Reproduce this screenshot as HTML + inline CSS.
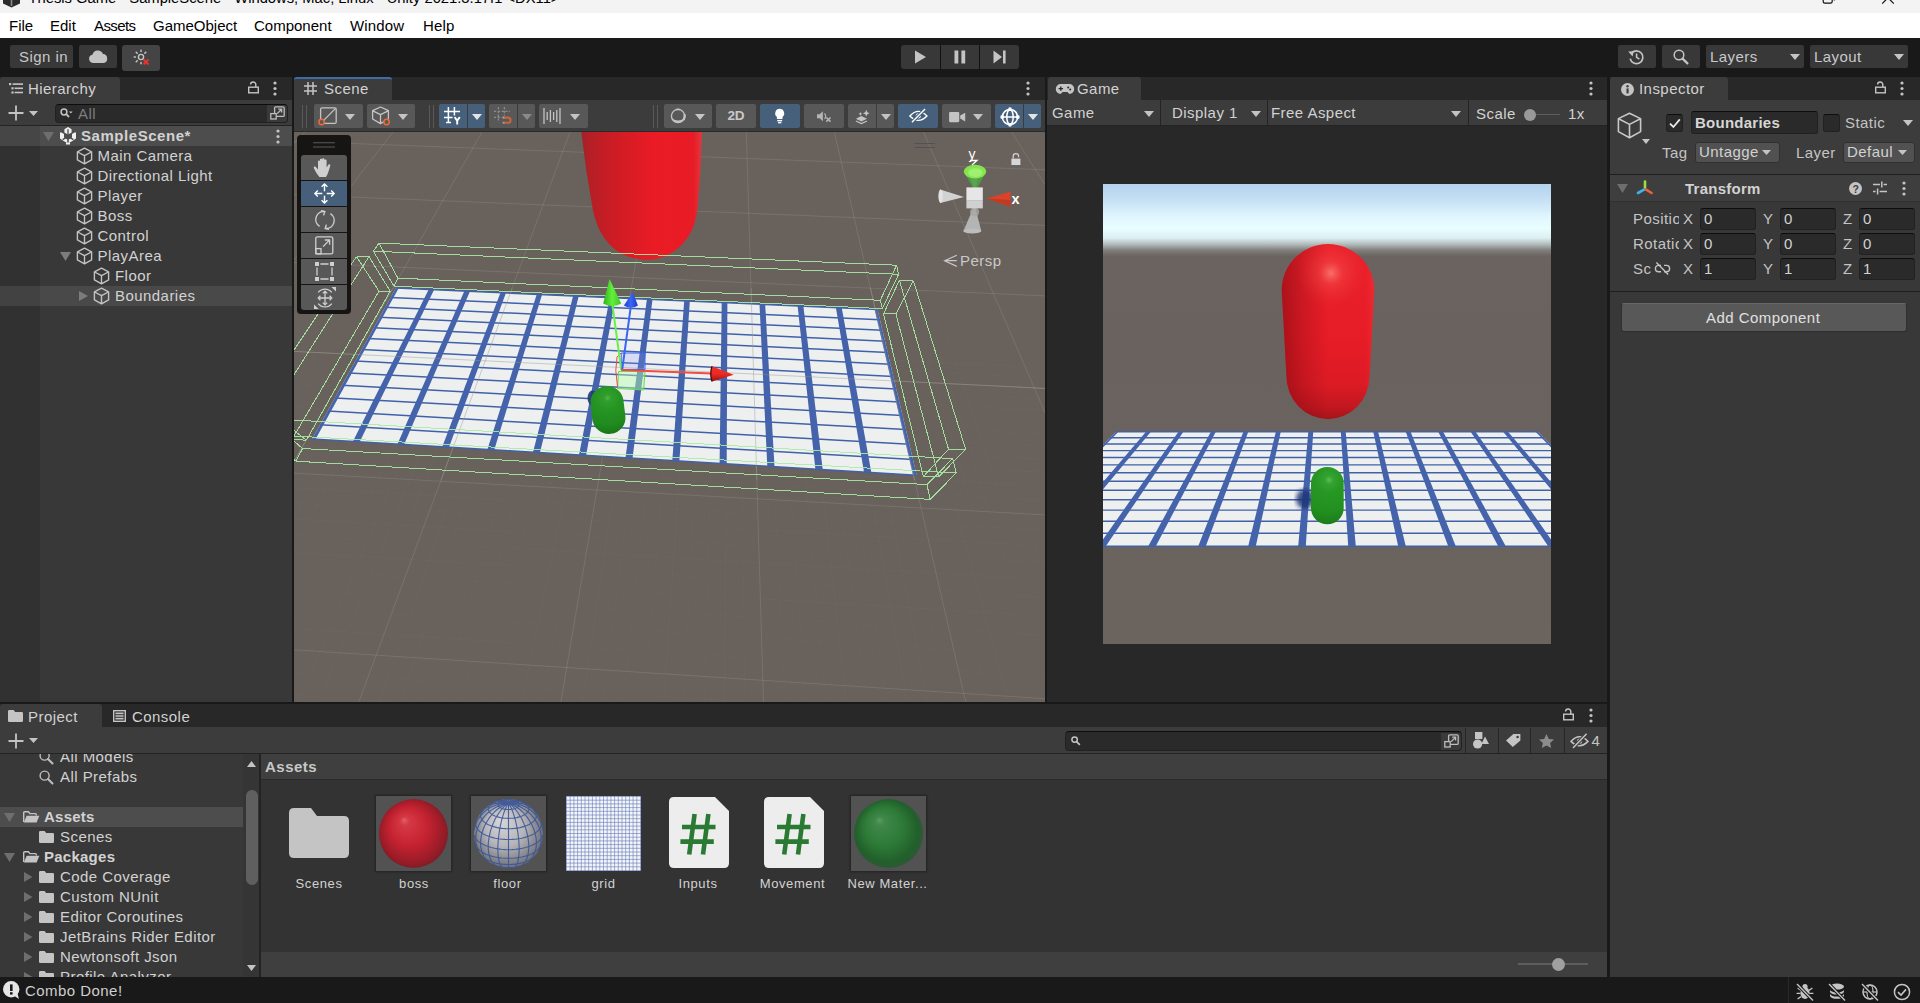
<!DOCTYPE html>
<html><head><meta charset="utf-8"><title>Unity</title><style>
*{box-sizing:border-box}
html,body{margin:0;padding:0}
body{width:1920px;height:1003px;position:relative;overflow:hidden;background:#191919;
 font-family:"Liberation Sans",sans-serif;font-size:15px;letter-spacing:.45px;color:#d2d2d2;line-height:20px}
.a{position:absolute}
.t{position:absolute;white-space:nowrap;line-height:20px;height:20px}
.b{font-weight:bold;letter-spacing:.25px}
.btn{position:absolute;background:#383838;border-radius:2px}
.tabbar{position:absolute;background:#282828;height:23px}
.tab{position:absolute;background:#3c3c3c;height:23px;border-radius:3px 3px 0 0}
.tool{position:absolute;background:#3c3c3c}
.panel{position:absolute;background:#383838}
.fld{position:absolute;background:#2a2a2a;border:1px solid #212121;border-top-color:#0d0d0d;border-radius:3px}
.sb{position:absolute;background:#585858;border-radius:2px;height:24px;top:104px}
.sbb{background:#46607c}
.row{position:absolute;left:0;width:292px;height:20px}
svg{position:absolute;overflow:visible}
.menu{position:absolute;top:15.8px;color:#000;letter-spacing:0;font-size:15px;line-height:20px;white-space:nowrap}
.al{position:absolute;top:875px;width:95px;text-align:center;font-size:13px;letter-spacing:.6px;line-height:18px;white-space:nowrap;color:#d2d2d2}
</style></head>
<body>
<div class="a" style="left:0px;top:0px;width:1920px;height:13px;background:#f3f3f3;"></div>
<svg style="left:2px;top:-8px" width="19" height="16" viewBox="0 0 19 16" ><path d="M9.5,0 L18,4.2 V11.4 L9.5,15.6 L1,11.4 V4.2 Z" fill="#2b2b2b"/><path d="M9.5,7.8 L16,4.6 M9.5,7.8 V14 M9.5,7.8 L3,4.6" stroke="#8a8a8a" stroke-width="1.6"/></svg>
<div class="t" style="left:28.5px;top:-12px;color:#000;letter-spacing:0;font-size:14.75px">Thesis Game - SampleScene - Windows, Mac, Linux - Unity 2021.3.17f1 &lt;DX11&gt;</div>
<svg style="left:1820px;top:0px" width="20" height="8" viewBox="0 0 20 8" ><rect x="3.2" y="-5" width="9" height="8.2" rx="1.6" fill="none" stroke="#111" stroke-width="1.2"/><path d="M14.3,-4V.6" stroke="#111" stroke-width="1.2"/></svg>
<svg style="left:1878px;top:0px" width="20" height="8" viewBox="0 0 20 8" ><path d="M4.2,3.6L16,-8.2M15.8,3.6L4,-8.2" stroke="#111" stroke-width="1.2" fill="none"/></svg>
<div class="a" style="left:0px;top:13px;width:1920px;height:25px;background:#ffffff;"></div>
<div class="menu" style="left:9px;">File</div>
<div class="menu" style="left:50px;">Edit</div>
<div class="menu" style="left:94px;letter-spacing:-.6px;">Assets</div>
<div class="menu" style="left:153px;">GameObject</div>
<div class="menu" style="left:254px;">Component</div>
<div class="menu" style="left:350px;letter-spacing:.15px;">Window</div>
<div class="menu" style="left:423px;letter-spacing:.15px;">Help</div>
<div class="a" style="left:0px;top:38px;width:1920px;height:39px;background:#191919;"></div>
<div class="btn" style="left:10px;top:45px;width:63px;height:23px"></div>
<div class="t" style="left:19px;top:46.5px;color:#c8c8c8">Sign in</div>
<div class="btn" style="left:79px;top:45px;width:38px;height:23px"></div>
<svg style="left:88px;top:50px" width="20" height="13" viewBox="0 0 20 13" ><path d="M5,13 a4.2,4.2 0 0 1 -.6,-8.3 a5.6,5.6 0 0 1 10.6,-.6 a4.5,4.5 0 0 1 .6,8.9 Z" fill="#c4c4c4"/></svg>
<div class="btn" style="left:122px;top:45px;width:38px;height:26px;background:#444;border-radius:3px"></div>
<svg style="left:133px;top:49px" width="18" height="18" viewBox="0 0 18 18" ><circle cx="8" cy="8" r="2.6" fill="none" stroke="#c4c4c4" stroke-width="1.4"/><g stroke="#c4c4c4" stroke-width="1.5" stroke-linecap="round"><path d="M8,1.2v1.2M8,13.6v1.2M1.2,8h1.2M3.2,3.2l.9,.9M12.8,3.2l-.9,.9M3.2,12.8l.9,-.9"/></g><path d="M10.5,10.5l5,5M15.5,10.5l-5,5" stroke="#e5342c" stroke-width="2.1"/></svg>
<div class="a" style="left:901px;top:45px;width:118px;height:23.5px;background:#121212;border-radius:3px"></div>
<div class="a" style="left:901px;top:45px;width:38.5px;height:23.5px;background:#383838;border-radius:3px 0 0 3px"></div>
<div class="a" style="left:940.5px;top:45px;width:38.5px;height:23.5px;background:#383838;border-radius:0"></div>
<div class="a" style="left:980px;top:45px;width:39px;height:23.5px;background:#383838;border-radius:0 3px 3px 0"></div>
<svg style="left:914px;top:50px" width="13" height="14" viewBox="0 0 13 14" ><polygon points="1,0.5 12,7 1,13.5" fill="#c4c4c4"/></svg>
<svg style="left:954px;top:50px" width="12" height="14" viewBox="0 0 12 14" ><rect x="0.5" y="0.5" width="3.8" height="13" fill="#c4c4c4"/><rect x="7.4" y="0.5" width="3.8" height="13" fill="#c4c4c4"/></svg>
<svg style="left:993px;top:50px" width="14" height="14" viewBox="0 0 14 14" ><polygon points="0.5,0.5 9,7 0.5,13.5" fill="#c4c4c4"/><rect x="10" y="0.5" width="2.6" height="13" fill="#c4c4c4"/></svg>
<div class="btn" style="left:1618px;top:45px;width:38px;height:23px"></div>
<svg style="left:1628px;top:49px" width="17" height="16" viewBox="0 0 17 16" ><path d="M3.2,4.6 A6.4,6.4 0 1 1 2.2,9.6" fill="none" stroke="#c4c4c4" stroke-width="1.7"/><polygon points="0.2,2.6 5.8,2.2 4.6,7.4" fill="#c4c4c4"/><path d="M8.6,4.4V8.4L11.4,10.2" fill="none" stroke="#c4c4c4" stroke-width="1.6"/></svg>
<div class="btn" style="left:1662px;top:45px;width:38px;height:23px"></div>
<svg style="left:1673px;top:49px" width="16" height="16" viewBox="0 0 16 16" ><circle cx="6" cy="6" r="4.8" fill="none" stroke="#c4c4c4" stroke-width="1.5"/><path d="M9.6,9.6 L14.4,14.4" stroke="#c4c4c4" stroke-width="2.2" stroke-linecap="round"/></svg>
<div class="btn" style="left:1706px;top:45px;width:98px;height:23px"></div>
<div class="t" style="left:1710px;top:46.5px;color:#c8c8c8">Layers</div>
<svg style="left:1790px;top:54px" width="10" height="6" viewBox="0 0 10 6" ><polygon points="0,0 10,0 5.0,6" fill="#c4c4c4"/></svg>
<div class="btn" style="left:1810px;top:45px;width:98px;height:23px"></div>
<div class="t" style="left:1814px;top:46.5px;color:#c8c8c8">Layout</div>
<svg style="left:1894px;top:54px" width="10" height="6" viewBox="0 0 10 6" ><polygon points="0,0 10,0 5.0,6" fill="#c4c4c4"/></svg>
<div class="tabbar" style="left:0;top:77px;width:292px"></div>
<div class="tab" style="left:0;top:77px;width:120px"></div>
<svg style="left:9px;top:83px" width="14" height="11" viewBox="0 0 14 11" ><g fill="#c4c4c4"><rect x="0" y="0" width="2.2" height="2.2"/><rect x="3.6" y=".3" width="10.4" height="1.6"/><rect x="2.4" y="4.2" width="2.2" height="2.2"/><rect x="5.6" y="4.5" width="8.4" height="1.6"/><rect x="2.4" y="8.4" width="2.2" height="2.2"/><rect x="5.6" y="8.7" width="8.4" height="1.6"/></g></svg>
<div class="t" style="left:28px;top:78.5px;">Hierarchy</div>
<svg style="left:248px;top:81px" width="11" height="13" viewBox="0 0 11 13" ><rect x=".7" y="6.2" width="9.6" height="5.6" fill="none" stroke="#c4c4c4" stroke-width="1.4"/><path d="M7.8,6V3.6a2.6,2.6 0 0 0 -5.2,0" fill="none" stroke="#c4c4c4" stroke-width="1.4"/></svg>
<svg style="left:273px;top:80.5px" width="4" height="15" viewBox="0 0 4 15" ><circle cx="2" cy="2" r="1.6" fill="#c4c4c4"/><circle cx="2" cy="7.5" r="1.6" fill="#c4c4c4"/><circle cx="2" cy="13" r="1.6" fill="#c4c4c4"/></svg>
<div class="tool" style="left:0;top:100px;width:292px;height:26px;border-bottom:1px solid #232323"></div>
<svg style="left:8px;top:105px" width="16" height="16" viewBox="0 0 16 16" ><path d="M8,0.5V15.5M0.5,8H15.5" stroke="#c4c4c4" stroke-width="1.8"/></svg>
<svg style="left:29px;top:110.5px" width="9" height="5" viewBox="0 0 9 5" ><polygon points="0,0 9,0 4.5,5" fill="#c4c4c4"/></svg>
<div class="fld" style="left:54.5px;top:103.5px;width:233.5px;height:19.5px;border-radius:4px"></div>
<div class="a" style="left:267px;top:105px;width:20px;height:17px;background:#3a3a3a;border-radius:0 3px 3px 0"></div>
<svg style="left:270px;top:106px" width="15" height="14" viewBox="0 0 15 14" ><rect x="4.6" y=".8" width="9.6" height="9.6" rx="1.2" fill="none" stroke="#bdbdbd" stroke-width="1.3"/><rect x=".8" y="7.6" width="5.4" height="5.4" fill="#3a3a3a" stroke="#bdbdbd" stroke-width="1.3"/><path d="M7.2,7.6L11.6,3.2M8.2,3.2h3.4v3.4" fill="none" stroke="#bdbdbd" stroke-width="1.3"/></svg>
<svg style="left:60px;top:108px" width="13" height="11" viewBox="0 0 13 11" ><circle cx="4" cy="4" r="2.9" fill="none" stroke="#c4c4c4" stroke-width="1.5"/><path d="M6.2,6.2L9,9" stroke="#c4c4c4" stroke-width="1.8"/><polygon points="9,3.4 12.6,3.4 10.8,5.6" fill="#c4c4c4"/></svg>
<div class="t" style="left:78px;top:103.5px;color:#7d7d7d">All</div>
<div class="a" style="left:0px;top:126px;width:292px;height:576px;background:#383838;"></div>
<div class="a" style="left:0px;top:126px;width:40px;height:576px;background:#313131;"></div>
<div class="a" style="left:0px;top:126px;width:292px;height:20px;background:rgba(255,255,255,.105);"></div>
<div class="a" style="left:0px;top:286px;width:292px;height:20px;background:rgba(255,255,255,.085);"></div>
<svg style="left:43px;top:131.5px" width="11" height="9" viewBox="0 0 11 9" ><polygon points="0,0 11,0 5.5,9" fill="#6e6e6e"/></svg>
<svg style="left:60px;top:127px" width="16" height="18" viewBox="0 0 16 18" ><g fill="#f0f0f0"><path d="M8,0 L11.6,2.2 V5.6 L8,7.4 L4.4,5.6 V2.2Z"/><path d="M1,5.2 L4,7 V10.6 L7.2,12.4 V16 L3.6,14 L0,11.4 V5.8Z"/><path d="M15,5.2 L12,7 V10.6 L8.8,12.4 V16 L12.4,14 L16,11.4 V5.8Z"/><rect x="6" y="15.5" width="4" height="2"/></g><path d="M8,2.2V9.4M8,9.4L2.6,12.6M8,9.4L13.4,12.6" stroke="#4a4a4a" stroke-width="1.3"/></svg>
<div class="t b" style="left:81px;top:125.5px;letter-spacing:.55px">SampleScene*</div>
<svg style="left:275.5px;top:128.5px" width="4" height="15" viewBox="0 0 4 15" ><circle cx="2" cy="2" r="1.6" fill="#c4c4c4"/><circle cx="2" cy="7.5" r="1.6" fill="#c4c4c4"/><circle cx="2" cy="13" r="1.6" fill="#c4c4c4"/></svg>
<svg style="left:76px;top:147px" width="17" height="18" viewBox="0 0 17 18" ><path d="M8.5,1.2 L15.6,4.9 V12.9 L8.5,16.8 L1.4,12.9 V4.9 Z M1.6,5 L8.5,8.7 L15.4,5 M8.5,8.7 V16.6" fill="none" stroke="#c2c2c2" stroke-width="1.4" stroke-linejoin="round"/></svg>
<div class="t" style="left:97.5px;top:145.5px;">Main Camera</div>
<svg style="left:76px;top:167px" width="17" height="18" viewBox="0 0 17 18" ><path d="M8.5,1.2 L15.6,4.9 V12.9 L8.5,16.8 L1.4,12.9 V4.9 Z M1.6,5 L8.5,8.7 L15.4,5 M8.5,8.7 V16.6" fill="none" stroke="#c2c2c2" stroke-width="1.4" stroke-linejoin="round"/></svg>
<div class="t" style="left:97.5px;top:165.5px;">Directional Light</div>
<svg style="left:76px;top:187px" width="17" height="18" viewBox="0 0 17 18" ><path d="M8.5,1.2 L15.6,4.9 V12.9 L8.5,16.8 L1.4,12.9 V4.9 Z M1.6,5 L8.5,8.7 L15.4,5 M8.5,8.7 V16.6" fill="none" stroke="#c2c2c2" stroke-width="1.4" stroke-linejoin="round"/></svg>
<div class="t" style="left:97.5px;top:185.5px;">Player</div>
<svg style="left:76px;top:207px" width="17" height="18" viewBox="0 0 17 18" ><path d="M8.5,1.2 L15.6,4.9 V12.9 L8.5,16.8 L1.4,12.9 V4.9 Z M1.6,5 L8.5,8.7 L15.4,5 M8.5,8.7 V16.6" fill="none" stroke="#c2c2c2" stroke-width="1.4" stroke-linejoin="round"/></svg>
<div class="t" style="left:97.5px;top:205.5px;">Boss</div>
<svg style="left:76px;top:227px" width="17" height="18" viewBox="0 0 17 18" ><path d="M8.5,1.2 L15.6,4.9 V12.9 L8.5,16.8 L1.4,12.9 V4.9 Z M1.6,5 L8.5,8.7 L15.4,5 M8.5,8.7 V16.6" fill="none" stroke="#c2c2c2" stroke-width="1.4" stroke-linejoin="round"/></svg>
<div class="t" style="left:97.5px;top:225.5px;">Control</div>
<svg style="left:76px;top:247px" width="17" height="18" viewBox="0 0 17 18" ><path d="M8.5,1.2 L15.6,4.9 V12.9 L8.5,16.8 L1.4,12.9 V4.9 Z M1.6,5 L8.5,8.7 L15.4,5 M8.5,8.7 V16.6" fill="none" stroke="#c2c2c2" stroke-width="1.4" stroke-linejoin="round"/></svg>
<div class="t" style="left:97.5px;top:245.5px;">PlayArea</div>
<svg style="left:93px;top:267px" width="17" height="18" viewBox="0 0 17 18" ><path d="M8.5,1.2 L15.6,4.9 V12.9 L8.5,16.8 L1.4,12.9 V4.9 Z M1.6,5 L8.5,8.7 L15.4,5 M8.5,8.7 V16.6" fill="none" stroke="#c2c2c2" stroke-width="1.4" stroke-linejoin="round"/></svg>
<div class="t" style="left:115px;top:265.5px;">Floor</div>
<svg style="left:93px;top:287px" width="17" height="18" viewBox="0 0 17 18" ><path d="M8.5,1.2 L15.6,4.9 V12.9 L8.5,16.8 L1.4,12.9 V4.9 Z M1.6,5 L8.5,8.7 L15.4,5 M8.5,8.7 V16.6" fill="none" stroke="#c2c2c2" stroke-width="1.4" stroke-linejoin="round"/></svg>
<div class="t" style="left:115px;top:285.5px;">Boundaries</div>
<svg style="left:60px;top:251.5px" width="11" height="9" viewBox="0 0 11 9" ><polygon points="0,0 11,0 5.5,9" fill="#7c7c7c"/></svg>
<svg style="left:79px;top:290.5px" width="9" height="10" viewBox="0 0 9 10" ><polygon points="0,0 9,5.0 0,10" fill="#7c7c7c"/></svg>
<div class="tabbar" style="left:294px;top:77px;width:751px"></div>
<div class="tab" style="left:294px;top:77px;width:98px;border-top:2px solid #3a6ea5"></div>
<svg style="left:304px;top:82px" width="13" height="13" viewBox="0 0 13 13" ><path d="M4,0V13M9,0V13M0,4H13M0,9H13" stroke="#c4c4c4" stroke-width="1.5"/></svg>
<div class="t" style="left:324px;top:78.5px;">Scene</div>
<svg style="left:1025.5px;top:80.5px" width="4" height="15" viewBox="0 0 4 15" ><circle cx="2" cy="2" r="1.6" fill="#c4c4c4"/><circle cx="2" cy="7.5" r="1.6" fill="#c4c4c4"/><circle cx="2" cy="13" r="1.6" fill="#c4c4c4"/></svg>
<div class="tool" style="left:294px;top:100px;width:751px;height:32px"></div>
<div class="a" style="left:294px;top:131px;width:751px;height:1.5px;background:#2a2a2a;"></div>
<svg style="left:301px;top:105px" width="7" height="23" viewBox="0 0 7 23" ><path d="M1.5,0V23M5.5,0V23" stroke="#595959" stroke-width="1"/></svg>
<svg style="left:428px;top:105px" width="7" height="23" viewBox="0 0 7 23" ><path d="M1.5,0V23M5.5,0V23" stroke="#595959" stroke-width="1"/></svg>
<svg style="left:652px;top:105px" width="7" height="23" viewBox="0 0 7 23" ><path d="M1.5,0V23M5.5,0V23" stroke="#595959" stroke-width="1"/></svg>
<div class="sb" style="left:314px;width:49px;border-radius:2px"></div>
<svg style="left:318px;top:107px" width="20" height="19" viewBox="0 0 20 19" ><rect x="2.6" y=".8" width="15.6" height="15.6" rx="1.5" fill="none" stroke="#c4c4c4" stroke-width="1.3"/><path d="M5.4,13.6L17.6,1.4" stroke="#c4c4c4" stroke-width="1.3"/><circle cx="3.6" cy="15" r="2.7" fill="#585858" stroke="#f0693b" stroke-width="1.5"/></svg>
<svg style="left:345px;top:113.5px" width="10" height="6" viewBox="0 0 10 6" ><polygon points="0,0 10,0 5.0,6" fill="#c4c4c4"/></svg>
<div class="sb" style="left:367px;width:48px;border-radius:2px"></div>
<svg style="left:371px;top:106px" width="21" height="21" viewBox="0 0 21 21" ><path d="M9.5,1 L17.4,4.6 V13 L9.5,17.6 L1.6,13 V4.6 Z M1.8,4.8 L9.5,8.6 L17.2,4.8 M9.5,8.6 V17.4" fill="none" stroke="#c4c4c4" stroke-width="1.3" stroke-linejoin="round"/><circle cx="15.6" cy="16" r="2.7" fill="#585858" stroke="#f0693b" stroke-width="1.5"/></svg>
<svg style="left:398px;top:113.5px" width="10" height="6" viewBox="0 0 10 6" ><polygon points="0,0 10,0 5.0,6" fill="#c4c4c4"/></svg>
<div class="sb sbb" style="left:439px;width:28px;border-radius:2px 0 0 2px"></div>
<div class="sb sbb" style="left:468px;width:17px;border-radius:0 2px 2px 0"></div>
<svg style="left:444px;top:107px" width="19" height="19" viewBox="0 0 19 19" ><g stroke="#fff" stroke-width="1.5" fill="none"><path d="M4.4,0V15.5M10.4,0V8.4M0,4.4H16M0,10.4H8.6M2,15.4h5"/><path d="M10.6,10.2L13.2,13.6L15.8,10.2M13.2,13.6V17.6" stroke-width="1.9"/></g></svg>
<svg style="left:472px;top:113.5px" width="10" height="6" viewBox="0 0 10 6" ><polygon points="0,0 10,0 5.0,6" fill="#e4e4e4"/></svg>
<div class="sb" style="left:489px;width:28px;border-radius:2px 0 0 2px"></div>
<div class="sb" style="left:518px;width:17px;border-radius:0 2px 2px 0"></div>
<svg style="left:494px;top:107px" width="19" height="19" viewBox="0 0 19 19" ><g stroke="#8d8d8d" stroke-width="1.3" fill="none" stroke-dasharray="2.2 1.6"><path d="M4.4,0V15.5M10.4,0V8.4M0,4.4H16M0,10.4H8.6"/></g><path d="M9.4,10.6H14a2.6,2.6 0 0 1 0,5.2H9.4" fill="none" stroke="#c8643c" stroke-width="2.1"/><path d="M8.6,10.6h1.8M8.6,15.8h1.8" stroke="#9a9a9a" stroke-width="2.1"/></svg>
<svg style="left:522px;top:113.5px" width="10" height="6" viewBox="0 0 10 6" ><polygon points="0,0 10,0 5.0,6" fill="#8a8a8a"/></svg>
<div class="sb" style="left:539px;width:49px;border-radius:2px"></div>
<svg style="left:543px;top:108px" width="18" height="17" viewBox="0 0 18 17" ><g stroke="#c4c4c4" stroke-width="1.3"><path d="M1,0V16M17,0V16" /><path d="M4.2,4V12M7.4,2V14M10.6,4V12M13.8,2V14"/></g></svg>
<svg style="left:570px;top:113.5px" width="10" height="6" viewBox="0 0 10 6" ><polygon points="0,0 10,0 5.0,6" fill="#c4c4c4"/></svg>
<div class="sb" style="left:664px;width:48px;border-radius:2px"></div>
<svg style="left:669.5px;top:108px" width="17" height="17" viewBox="0 0 19 19" ><circle cx="9" cy="9" r="7.4" fill="none" stroke="#c4c4c4" stroke-width="1.5"/><path d="M2.05,11.53 A7.4,7.4 0 0 0 15.95,11.53 A12,12 0 0 1 2.05,11.53Z" fill="#c4c4c4"/><path d="M15.2,13.2 A7.4,7.4 0 0 0 16.2,7" fill="none" stroke="#c4c4c4" stroke-width="2.6"/><path d="M7,1.6h4" stroke="#c4c4c4" stroke-width="1.8"/></svg>
<svg style="left:695px;top:113.5px" width="10" height="6" viewBox="0 0 10 6" ><polygon points="0,0 10,0 5.0,6" fill="#c4c4c4"/></svg>
<div class="sb" style="left:716px;width:40px;border-radius:2px"></div>
<div class="t" style="left:727.5px;top:106px;font-weight:bold;letter-spacing:-.2px;font-size:13.6px;color:#c8c8c8">2D</div>
<div class="sb sbb" style="left:760px;width:40px;border-radius:2px"></div>
<svg style="left:774.3px;top:107.6px" width="11.4" height="16.4" viewBox="0 0 14 20" ><path d="M7,1 a5.6,5.6 0 0 1 3.4,10 V13.4 H3.6 V11 A5.6,5.6 0 0 1 7,1Z" fill="#fff"/><rect x="4" y="14.6" width="6" height="1.8" fill="#fff"/><rect x="5" y="17.2" width="4" height="1.6" fill="#fff"/></svg>
<div class="sb" style="left:804px;width:40px;border-radius:2px"></div>
<svg style="left:817px;top:109.5px" width="15.5" height="13.2" viewBox="0 0 20 17" ><path d="M0,5.4H3.4L7.6,1.6V14.4L3.4,10.6H0Z" fill="#b4b4b4"/><path d="M9.6,4.6a4.4,4.4 0 0 1 0,6.8" stroke="#b4b4b4" stroke-width="1.6" fill="none"/><path d="M12,9.6l5.4,5.4M17.4,9.6l-5.4,5.4" stroke="#b4b4b4" stroke-width="2"/></svg>
<div class="sb" style="left:848px;width:28px;border-radius:2px 0 0 2px"></div>
<div class="sb" style="left:877px;width:17px;border-radius:0 2px 2px 0"></div>
<svg style="left:854.5px;top:108.5px" width="16" height="16" viewBox="0 0 19 19" ><path d="M1,11.6L7.6,8.4L14.2,11.6L7.6,14.8Z" fill="#c4c4c4"/><path d="M1,14.2L7.6,17.4L14.2,14.2" stroke="#c4c4c4" stroke-width="1.4" fill="none"/><path d="M13.4,1l1.2,2.8l2.8,1.2l-2.8,1.2l-1.2,2.8l-1.2,-2.8l-2.8,-1.2l2.8,-1.2Z" fill="#c4c4c4"/><path d="M6.4,3.6l.7,1.5l1.5,.7l-1.5,.7l-.7,1.5l-.7,-1.5l-1.5,-.7l1.5,-.7Z" fill="#c4c4c4"/></svg>
<svg style="left:880.5px;top:113.5px" width="10" height="6" viewBox="0 0 10 6" ><polygon points="0,0 10,0 5.0,6" fill="#c4c4c4"/></svg>
<div class="sb sbb" style="left:898px;width:40px;border-radius:2px"></div>
<svg style="left:908.6px;top:108.4px" width="18.8" height="15.4" viewBox="0 0 22 18" ><path d="M1,9.4 Q11,-1.6 21,9.4 Q11,19.6 1,9.4Z" fill="none" stroke="#fff" stroke-width="1.6"/><circle cx="11" cy="9.2" r="3" fill="#fff"/><path d="M3.4,16.6L18.8,1.2" stroke="#46607c" stroke-width="4"/><path d="M3.4,16.6L18.8,1.2" stroke="#fff" stroke-width="1.6"/></svg>
<div class="sb" style="left:942px;width:49px;border-radius:2px"></div>
<svg style="left:948.5px;top:111.5px" width="16.6" height="10.2" viewBox="0 0 21 13" ><rect x="0" y="0" width="13" height="13" rx="1.4" fill="#c4c4c4"/><polygon points="14.2,4.6 20.6,.8 20.6,12.2 14.2,8.4" fill="#c4c4c4"/></svg>
<svg style="left:973px;top:113.5px" width="10" height="6" viewBox="0 0 10 6" ><polygon points="0,0 10,0 5.0,6" fill="#c4c4c4"/></svg>
<div class="sb sbb" style="left:995px;width:28px;border-radius:2px 0 0 2px"></div>
<div class="sb sbb" style="left:1024px;width:17px;border-radius:0 2px 2px 0"></div>
<svg style="left:999.5px;top:106.5px" width="20" height="20" viewBox="0 0 20 20" ><g fill="none" stroke="#fff" stroke-width="1.5"><circle cx="10" cy="10" r="7.6"/><ellipse cx="10" cy="10" rx="3.2" ry="7.6"/><path d="M2.4,10H17.6"/></g><circle cx="10" cy="2.2" r="1.9" fill="#fff"/><circle cx="10" cy="17.8" r="1.9" fill="#fff"/><circle cx="2.2" cy="10" r="1.9" fill="#fff"/><circle cx="17.8" cy="10" r="1.9" fill="#fff"/></svg>
<svg style="left:1027.5px;top:113.5px" width="10" height="6" viewBox="0 0 10 6" ><polygon points="0,0 10,0 5.0,6" fill="#e4e4e4"/></svg>
<svg class="a" style="left:294px;top:132px" width="751" height="570" viewBox="294 132 751 570">
<defs>
<clipPath id="scl"><rect x="294" y="132" width="751" height="570"/></clipPath>
<filter id="fb" x="-5%" y="-5%" width="110%" height="110%"><feGaussianBlur stdDeviation=".7"/></filter>
<linearGradient id="rcap" x1="0" x2="1" y1="0" y2="0">
<stop offset="0" stop-color="#9c2329"/><stop offset=".06" stop-color="#b41f26"/><stop offset=".3" stop-color="#d01c24"/><stop offset=".6" stop-color="#ea1b25"/><stop offset=".93" stop-color="#e81c26"/><stop offset="1" stop-color="#e2383e"/></linearGradient>
<radialGradient id="gcap" cx="609" cy="398" r="36" gradientUnits="userSpaceOnUse"><stop offset="0" stop-color="#52b44c"/><stop offset=".1" stop-color="#2f9e2c"/><stop offset=".35" stop-color="#259422"/><stop offset=".75" stop-color="#208a1e"/><stop offset="1" stop-color="#1a7619"/></radialGradient>
<linearGradient id="gcone" x1="0" x2="1"><stop offset="0" stop-color="#2fae1c"/><stop offset=".5" stop-color="#63f03c"/><stop offset="1" stop-color="#3fc425"/></linearGradient>
<linearGradient id="bcone" x1="0" x2="1"><stop offset="0" stop-color="#1f3fd0"/><stop offset=".5" stop-color="#3a66f6"/><stop offset="1" stop-color="#1c38c4"/></linearGradient>
<linearGradient id="rcone" x1="0" x2="0" y1="0" y2="1"><stop offset="0" stop-color="#f03028"/><stop offset=".5" stop-color="#ee2a22"/><stop offset="1" stop-color="#9c1410"/></linearGradient>
</defs>
<g clip-path="url(#scl)">
<rect x="294" y="132" width="751" height="570" fill="#69615b"/>
<path d="M128.2,132L-655.3,702M216.6,132L-452.4,702M305.0,132L-249.5,702M393.0,132L-47.5,702M482.0,132L156.8,702M570.0,132L358.8,702M658.0,132L560.8,702M746.3,132L763.5,702M834.4,132L965.8,702M923.5,132L1170.3,702M1011.6,132L1372.5,702M1100.0,132L1575.4,702M1188.5,132L1778.6,702M1277.0,132L1981.7,702M294,141.3L1045,169.8M294,194.7L1045,225.4M294,262.5L1045,295.9M294,351.4L1045,388.4M294,473.1L1045,514.9M294,649.8L1045,698.7" stroke="#c0c8c6" stroke-opacity=".17" stroke-width="1" fill="none"/>
<path d="M-259.3,330L-837.9,702M-246.5,330L-817.6,702M-233.7,330L-797.3,702M-220.9,330L-777.0,702M-208.0,330L-756.8,702M-195.2,330L-736.5,702M-182.4,330L-716.2,702M-169.6,330L-695.9,702M-156.8,330L-675.6,702M-131.1,330L-635.0,702M-118.3,330L-614.7,702M-105.5,330L-594.4,702M-92.7,330L-574.1,702M-79.9,330L-553.8,702M-67.1,330L-533.5,702M-54.2,330L-513.2,702M-41.4,330L-493.0,702M-28.6,330L-472.7,702M-3.0,330L-432.1,702M9.9,330L-411.8,702M22.7,330L-391.5,702M35.5,330L-371.2,702M48.3,330L-350.9,702M61.1,330L-330.6,702M73.9,330L-310.3,702M86.8,330L-290.0,702M99.6,330L-269.7,702M125.2,330L-229.2,702M138.0,330L-208.9,702M150.9,330L-188.6,702M163.7,330L-168.3,702M176.5,330L-148.0,702M189.3,330L-127.7,702M202.1,330L-107.4,702M214.9,330L-87.1,702M227.8,330L-66.8,702M253.4,330L-26.2,702M266.2,330L-6.0,702M279.0,330L14.3,702M291.9,330L34.6,702M304.7,330L54.9,702M317.5,330L75.2,702M330.3,330L95.5,702M343.1,330L115.8,702M355.9,330L136.1,702M381.6,330L176.7,702M394.4,330L197.0,702M407.2,330L217.3,702M420.0,330L237.5,702M432.9,330L257.8,702M445.7,330L278.1,702M458.5,330L298.4,702M471.3,330L318.7,702M484.1,330L339.0,702M509.8,330L379.6,702M522.6,330L399.9,702M535.4,330L420.2,702M548.2,330L440.5,702M561.0,330L460.8,702M573.8,330L481.1,702M586.7,330L501.3,702M599.5,330L521.6,702M612.3,330L541.9,702M637.9,330L582.5,702M650.8,330L602.8,702M663.6,330L623.1,702M676.4,330L643.4,702M689.2,330L663.7,702M702.0,330L684.0,702M714.8,330L704.3,702M727.7,330L724.6,702M740.5,330L744.8,702M766.1,330L785.4,702M778.9,330L805.7,702M791.8,330L826.0,702M804.6,330L846.3,702M817.4,330L866.6,702M830.2,330L886.9,702M843.0,330L907.2,702M855.8,330L927.5,702M868.7,330L947.8,702M894.3,330L988.3,702M907.1,330L1008.6,702M919.9,330L1028.9,702M932.8,330L1049.2,702M945.6,330L1069.5,702M958.4,330L1089.8,702M971.2,330L1110.1,702M984.0,330L1130.4,702M996.8,330L1150.7,702M1022.5,330L1191.3,702M1035.3,330L1211.6,702M1048.1,330L1231.8,702M1060.9,330L1252.1,702M1073.8,330L1272.4,702M1086.6,330L1292.7,702M1099.4,330L1313.0,702M1112.2,330L1333.3,702M1125.0,330L1353.6,702M1150.7,330L1394.2,702M1163.5,330L1414.5,702M1176.3,330L1434.8,702M1189.1,330L1455.1,702M1201.9,330L1475.4,702M1214.7,330L1495.6,702M1227.6,330L1515.9,702M1240.4,330L1536.2,702M1253.2,330L1556.5,702M1278.8,330L1597.1,702M1291.7,330L1617.4,702M1304.5,330L1637.7,702M1317.3,330L1658.0,702M1330.1,330L1678.3,702M1342.9,330L1698.6,702M1355.7,330L1718.9,702M1368.6,330L1739.1,702M1381.4,330L1759.4,702M1407.0,330L1800.0,702M1419.8,330L1820.3,702M1432.7,330L1840.6,702M1445.5,330L1860.9,702M1458.3,330L1881.2,702M1471.1,330L1901.5,702M1483.9,330L1921.8,702M1496.7,330L1942.1,702M1509.6,330L1962.4,702M1535.2,330L2002.9,702M1548.0,330L2023.2,702M1560.8,330L2043.5,702M1573.7,330L2063.8,702M1586.5,330L2084.1,702M1599.3,330L2104.4,702M1612.1,330L2124.7,702M1624.9,330L2145.0,702M1637.7,330L2165.3,702M294,331.5L1045,367.6M294,341.3L1045,377.9M294,361.9L1045,399.2M294,372.7L1045,410.4M294,383.8L1045,422.0M294,395.3L1045,434.0M294,407.2L1045,446.3M294,419.5L1045,459.1M294,432.2L1045,472.3M294,445.3L1045,486.0M294,459.0L1045,500.2M294,487.8L1045,530.2M294,503.1L1045,546.0M294,518.9L1045,562.5M294,535.4L1045,579.6M294,552.5L1045,597.5M294,570.4L1045,616.0M294,589.0L1045,635.4M294,608.4L1045,655.6M294,628.6L1045,676.6M294,672.0L1045,721.7M294,695.2L1045,745.9M294,719.5L1045,771.2M294,745.1L1045,797.7M294,771.9L1045,825.6M294,800.2L1045,855.0M294,830.0L1045,886.0M294,861.4L1045,918.6M294,894.6L1045,953.2" stroke="#c0c8c6" stroke-opacity=".03" stroke-width="1" fill="none"/>
<g filter="url(#fb)">
<polygon points="312.2,439.1 916.7,475.2 877.5,309.5 395.9,288.1" fill="#eef0f0"/>
<path d="M312.2,439.1L916.7,475.2M320.1,424.8L913.0,459.4M327.7,411.1L909.4,444.2M335.0,397.9L905.9,429.6M342.1,385.2L902.6,415.5M348.9,372.9L899.4,402.0M355.5,361.0L896.3,389.0M361.9,349.5L893.3,376.4M368.0,338.4L890.5,364.3M374.0,327.7L887.7,352.6M379.7,317.3L885.0,341.3M385.3,307.3L882.4,330.3M390.7,297.5L879.9,319.7M395.9,288.1L877.5,309.5" stroke="#4060aa" stroke-width="1.5" fill="none"/>
<polygon points="312.2,439.1 315.5,439.3 398.6,288.2 395.9,288.1" fill="#4463ab"/>
<polygon points="352.9,441.5 359.6,441.9 434.1,289.8 428.7,289.6" fill="#4463ab"/>
<polygon points="397.4,444.2 404.1,444.6 469.9,291.4 464.4,291.1" fill="#4463ab"/>
<polygon points="442.2,446.9 449.0,447.3 505.9,293.0 500.4,292.7" fill="#4463ab"/>
<polygon points="487.4,449.6 494.2,450.0 542.1,294.6 536.7,294.4" fill="#4463ab"/>
<polygon points="533.0,452.3 539.9,452.7 578.7,296.2 573.1,296.0" fill="#4463ab"/>
<polygon points="579.0,455.0 586.0,455.5 615.5,297.9 609.9,297.6" fill="#4463ab"/>
<polygon points="625.5,457.8 632.5,458.2 652.5,299.5 646.9,299.3" fill="#4463ab"/>
<polygon points="672.3,460.6 679.4,461.0 689.8,301.2 684.2,300.9" fill="#4463ab"/>
<polygon points="719.6,463.4 726.7,463.9 727.4,302.8 721.7,302.6" fill="#4463ab"/>
<polygon points="767.3,466.3 774.5,466.7 765.2,304.5 759.5,304.3" fill="#4463ab"/>
<polygon points="815.4,469.2 822.7,469.6 803.4,306.2 797.6,305.9" fill="#4463ab"/>
<polygon points="864.0,472.1 871.3,472.5 841.8,307.9 835.9,307.7" fill="#4463ab"/>
<polygon points="913.0,475.0 916.7,475.2 877.5,309.5 874.6,309.4" fill="#4463ab"/>
</g>
<path d="M393.0,288L283.5,480M512.2,288L441.1,480M751.0,288L756.8,480M870.4,288L914.6,480M294,351.4L1045,388.4" stroke="#9a9a90" stroke-opacity=".45" stroke-width="1" fill="none"/>
<ellipse cx="592.5" cy="398" rx="5" ry="7.5" fill="#22377a" opacity=".9" filter="url(#fb)"/>
<g transform="rotate(-7 608 410)"><rect x="591.5" y="386" width="33" height="48" rx="16.5" ry="16" fill="url(#gcap)"/></g>
<path d="M581,130 L586.5,171.9 L592.8,209.6 C594,215 595,218.5 596.3,222 C599,230 602,235 606,240.3 C610,245.5 614.5,249.5 620,252.8 C625,255.8 630,257.5 635.4,258.6 C640,259.6 644,259.9 647,259.8 C651,259.7 654,259.3 657.7,258.4 C663,257.2 667.5,255.4 671.7,252.8 C677,249.5 681.5,245.5 685.6,240.3 C689,236 691.8,231 694,225 C695.8,220 696.7,215 697.5,209.6 L700.3,171.9 L702.1,130 Z" fill="url(#rcap)"/>
<path d="M379.0,243.1L373.4,251.2M896.6,265.2L898.6,274.3M379.0,243.1L896.6,265.2M373.4,251.2L394.0,286.2M898.6,274.3L882.3,308.6M373.4,251.2L898.6,274.3M394.0,286.2L397.8,278.1M882.3,308.6L880.3,300.3M394.0,286.2L882.3,308.6M397.8,278.1L379.0,243.1M880.3,300.3L896.6,265.2M397.8,278.1L880.3,300.3M356.5,256.6L369.0,256.6M254.0,409.8L270.3,412.0M356.5,256.6L254.0,409.8M369.0,256.6L390.2,291.2M270.3,412.0L306.5,440.2M369.0,256.6L270.3,412.0M390.2,291.2L379.0,291.2M306.5,440.2L292.0,439.4M390.2,291.2L306.5,440.2M379.0,291.2L356.5,256.6M292.0,439.4L254.0,409.8M379.0,291.2L292.0,439.4M899.4,280.3L913.4,280.7M948.5,449.2L965.6,449.2M899.4,280.3L948.5,449.2M913.4,280.7L895.9,313.8M965.6,449.2L938.7,477.0M913.4,280.7L965.6,449.2M895.9,313.8L883.5,313.8M938.7,477.0L923.4,476.5M895.9,313.8L938.7,477.0M883.5,313.8L899.4,280.3M923.4,476.5L948.5,449.2M883.5,313.8L923.4,476.5M268.5,418.5L265.6,434.4M952.6,458.6L956.2,473.0M268.5,418.5L952.6,458.6M265.6,434.4L296.0,461.2M956.2,473.0L930.1,499.4M265.6,434.4L956.2,473.0M296.0,461.2L302.5,448.5M930.1,499.4L927.0,484.6M296.0,461.2L930.1,499.4M302.5,448.5L268.5,418.5M927.0,484.6L952.6,458.6M302.5,448.5L927.0,484.6" stroke="#a9eba4" stroke-width="1" fill="none" stroke-opacity=".9" shape-rendering="crispEdges"/>
<polygon points="621.2,353 645,353 645,369.6 621.2,369.6" fill="#8a96ff" fill-opacity=".22" stroke="#3a63f2" stroke-width="1"/>
<polygon points="618.5,371.4 645,371.4 643.6,390 617.6,388.5" fill="#b9ffb0" fill-opacity=".45" stroke="#5fe040" stroke-width="1"/>
<polyline points="621,353 617,357 615.8,370.5 617.6,387.6" fill="none" stroke="#f04a40" stroke-width="1"/>
<line x1="621.2" y1="369.6" x2="612.3" y2="304" stroke="#6cf048" stroke-width="2"/>
<line x1="622.2" y1="369.6" x2="631" y2="305" stroke="#3a66f6" stroke-width="2"/>
<line x1="621.2" y1="370.0" x2="712" y2="373.4" stroke="#f24a44" stroke-width="2"/>
<path d="M609.5,279 L603.2,303.6 Q612.2,308.6 621.2,303.6 Z" fill="url(#gcone)"/>
<path d="M632.8,291.9 L623.9,305.4 Q631,309.8 637.9,305.4 Z" fill="url(#bcone)"/>
<path d="M733.7,374.7 L712,366.2 Q709.5,373.8 712,381.5 Z" fill="url(#rcone)"/>
<path d="M712,366.2 Q709.5,373.8 712,381.5" stroke="#3a0808" stroke-width="1.2" fill="none"/>
</g>
<g>
<path d="M915,143.5h20M915,147.5h20" stroke="#4f5356" stroke-width="1.2"/>
<text x="968.5" y="159" font-size="14" fill="#fff" letter-spacing="0">y</text>
<path d="M970,160.5h7l-5,4.5" stroke="#fff" stroke-width="1.3" fill="none"/>
<polygon points="964,172 986,172 975.3,192" fill="#4f9a44"/>
<polygon points="969,174 975,191 979,174" fill="#5aa650"/>
<ellipse cx="975" cy="171.6" rx="11.2" ry="6.8" fill="#86e44e"/>
<ellipse cx="975.3" cy="172.6" rx="7.2" ry="4.3" fill="#9df070"/>
<polygon points="974.6,205 963.4,231 981.3,231" fill="#b4b4b4"/>
<ellipse cx="972.3" cy="231" rx="9" ry="2.6" fill="#bdbdbd"/>
<circle cx="974.6" cy="212" r="4.6" fill="#a9a7a4" opacity=".8"/>
<rect x="966.4" y="187.4" width="16.4" height="13" fill="#e6e6e6"/>
<rect x="966.4" y="200.2" width="16.4" height="8.2" fill="#d0d0d0"/>
<polygon points="964,197 940.2,189.6 940.2,203" fill="#d2d2d2"/>
<ellipse cx="940.6" cy="196.3" rx="2.2" ry="6.7" fill="#e2e2e2"/>
<polygon points="986.6,198.6 1010.5,191.6 1010.5,206.8" fill="#d8432a"/>
<polygon points="986.6,198.6 1010.5,200 1010.5,206.8" fill="#c23a22"/>
<text x="1011.5" y="203.5" font-size="14.5" font-weight="bold" fill="#fff" letter-spacing="0">x</text>
<g fill="#d6d6d6"><rect x="1011.4" y="158.6" width="9" height="6.4"/><path d="M1013.2,158.6v-2.2a2.7,2.7 0 0 1 5.4,0v.8" fill="none" stroke="#d6d6d6" stroke-width="1.2"/></g>
<path d="M956.8,255.2L944.6,260.7L956.8,266.4M944.6,260.7H956.8" stroke="#c8c8c8" stroke-width="1.2" fill="none"/>
<text x="960" y="266" font-size="15" fill="#c9c9c9" letter-spacing=".5">Persp</text>
</g>
</svg>
<div class="a" style="left:297px;top:135px;width:54px;height:179px;background:#161514;border-radius:4px"></div>
<svg style="left:313px;top:142px" width="22" height="6" viewBox="0 0 22 6" ><path d="M0,.8H22M0,5H22" stroke="#5a5a5a" stroke-width="1.1"/></svg>
<div class="a" style="left:301px;top:155px;width:46px;height:24.5px;background:#585858;border-radius:3px 3px 0 0"></div>
<div class="a" style="left:301px;top:181px;width:46px;height:24.5px;background:#46607c;border-radius:0"></div>
<div class="a" style="left:301px;top:207px;width:46px;height:24.5px;background:#585858;border-radius:0"></div>
<div class="a" style="left:301px;top:233px;width:46px;height:24.5px;background:#585858;border-radius:0"></div>
<div class="a" style="left:301px;top:259px;width:46px;height:24.5px;background:#585858;border-radius:0"></div>
<div class="a" style="left:301px;top:285px;width:46px;height:24.5px;background:#585858;border-radius:0 0 3px 3px"></div>
<svg style="left:313px;top:158px" width="22" height="20" viewBox="0 0 22 20" ><path d="M6.4,19 C3.6,15.6 2,12.8 .8,10 C.4,8.8 1.6,8 2.6,8.8 L5,11.6 V3.6 C5,2.2 7,2.2 7,3.6 V8.4 V1.8 C7,.4 9.2,.4 9.2,1.8 V8.2 V1.2 C9.2,-.2 11.4,-.2 11.4,1.2 V8.4 V2.6 C11.4,1.2 13.6,1.2 13.6,2.6 V9.4 L15.4,6.8 C16.2,5.8 17.8,6.6 17.2,8 C16.2,11 15.4,15.4 13,19 Z" fill="#cfcfcf"/></svg>
<svg style="left:313.5px;top:183px" width="21" height="21" viewBox="0 0 21 21" ><g stroke="#fff" stroke-width="1.4" fill="none"><path d="M10.5,1V20M1,10.5H20"/><path d="M7.6,3.8L10.5,.9L13.4,3.8M7.6,17.2L10.5,20.1L13.4,17.2M3.8,7.6L.9,10.5L3.8,13.4M17.2,7.6L20.1,10.5L17.2,13.4"/></g><rect x="8.3" y="8.3" width="4.4" height="4.4" fill="#46607c"/></svg>
<svg style="left:314.5px;top:210px" width="20" height="20" viewBox="0 0 20 20" ><g stroke="#cfcfcf" stroke-width="1.4" fill="none"><path d="M4.6,16.4 A8,8 0 0 1 9.4,1.6"/><path d="M15.4,3.6 A8,8 0 0 1 10.6,18.4"/><path d="M6,.6L9.8,1.6L8.6,5.4M14,19.4L10.2,18.4L11.4,14.6"/></g></svg>
<svg style="left:315px;top:236px" width="19" height="19" viewBox="0 0 19 19" ><g stroke="#cfcfcf" stroke-width="1.3" fill="none"><rect x=".8" y=".8" width="17" height="17" rx="1.6"/><rect x=".8" y="12.6" width="5.2" height="5.2"/><path d="M8,10.6L14.6,4M9.8,4h4.8v4.8"/></g></svg>
<svg style="left:315px;top:262px" width="19" height="19" viewBox="0 0 19 19" ><g fill="#cfcfcf"><rect x="0" y="0" width="4" height="4"/><rect x="15" y="0" width="4" height="4"/><rect x="0" y="15" width="4" height="4"/><rect x="15" y="15" width="4" height="4"/></g><path d="M5.4,2H13.6M5.4,17H13.6M2,5.4V13.6M17,5.4V13.6" stroke="#cfcfcf" stroke-width="1.3"/></svg>
<svg style="left:313.5px;top:287px" width="22" height="22" viewBox="0 0 22 22" ><g stroke="#cfcfcf" stroke-width="1.3" fill="none"><path d="M4.2,5.4 A8.6,8.6 0 0 1 17.8,5.4M17.8,16.6 A8.6,8.6 0 0 1 4.2,16.6" /><path d="M11,4.4V17.6M4.4,11H17.6"/><path d="M8.8,6.4L11,4.2L13.2,6.4M8.8,15.6L11,17.8L13.2,15.6M6.4,8.8L4.2,11L6.4,13.2M15.6,8.8L17.8,11L15.6,13.2"/></g><polygon points="17.4,0 22,0 22,4.6" fill="#cfcfcf"/><polygon points="0,17.4 0,22 4.6,22" fill="#cfcfcf"/></svg>
<div class="tabbar" style="left:1047px;top:77px;width:560px"></div>
<div class="tab" style="left:1047.5px;top:77px;width:93.5px"></div>
<svg style="left:1056px;top:84px" width="18" height="10" viewBox="0 0 18 10" ><path d="M4.6,0H13.4A4.6,4.8 0 0 1 13.4,10 L11.4,8H6.6L4.6,10A4.6,4.8 0 0 1 4.6,0Z" fill="#c4c4c4"/><path d="M4.8,2.4V6.8M2.6,4.6H7" stroke="#282828" stroke-width="1.3"/><circle cx="12.2" cy="3.4" r="1" fill="#282828"/><circle cx="14.2" cy="5.6" r="1" fill="#282828"/></svg>
<div class="t" style="left:1077px;top:78.5px;">Game</div>
<svg style="left:1588.5px;top:80.5px" width="4" height="15" viewBox="0 0 4 15" ><circle cx="2" cy="2" r="1.6" fill="#c4c4c4"/><circle cx="2" cy="7.5" r="1.6" fill="#c4c4c4"/><circle cx="2" cy="13" r="1.6" fill="#c4c4c4"/></svg>
<div class="a" style="left:1047px;top:100px;width:560px;height:602px;background:#282828;"></div>
<div class="tool" style="left:1047px;top:100px;width:560px;height:26px;border-bottom:1px solid #232323"></div>
<div class="a" style="left:1160px;top:100px;width:1px;height:25px;background:#242424;"></div>
<div class="a" style="left:1266.5px;top:100px;width:1px;height:25px;background:#242424;"></div>
<div class="a" style="left:1467.5px;top:100px;width:1px;height:25px;background:#242424;"></div>
<div class="t" style="left:1052px;top:103.3px;">Game</div>
<svg style="left:1144px;top:110.5px" width="10" height="6" viewBox="0 0 10 6" ><polygon points="0,0 10,0 5.0,6" fill="#c4c4c4"/></svg>
<div class="t" style="left:1172px;top:103.3px;">Display 1</div>
<svg style="left:1251px;top:110.5px" width="10" height="6" viewBox="0 0 10 6" ><polygon points="0,0 10,0 5.0,6" fill="#c4c4c4"/></svg>
<div class="t" style="left:1271px;top:103.3px;">Free Aspect</div>
<svg style="left:1451px;top:110.5px" width="10" height="6" viewBox="0 0 10 6" ><polygon points="0,0 10,0 5.0,6" fill="#c4c4c4"/></svg>
<div class="t" style="left:1476px;top:104px;">Scale</div>
<div class="a" style="left:1530px;top:113.5px;width:30px;height:1.6px;background:#5e5e5e;"></div>
<div class="a" style="left:1524px;top:108.5px;width:12px;height:12px;background:#999;border-radius:6px"></div>
<div class="t" style="left:1568px;top:104px;">1x</div>
<svg class="a" style="left:1103px;top:184px" width="448" height="460" viewBox="1103 184 448 460">
<defs><clipPath id="gcl"><rect x="1103" y="184" width="448" height="460"/></clipPath>
<linearGradient id="sky" x1="0" x2="0" y1="184" y2="644" gradientUnits="userSpaceOnUse">
<stop offset="0" stop-color="#b3d2ee"/><stop offset=".035" stop-color="#c6e0f4"/><stop offset=".07" stop-color="#e0f6fe"/><stop offset=".096" stop-color="#e8feff"/><stop offset=".117" stop-color="#dcf0f2"/><stop offset=".131" stop-color="#b2bbbb"/><stop offset=".144" stop-color="#807e7b"/><stop offset=".157" stop-color="#6a635f"/><stop offset=".3" stop-color="#6a625e"/><stop offset="1" stop-color="#6b635e"/></linearGradient>
<linearGradient id="rsh" x1="1281.7" x2="1374.3" y1="0" y2="0" gradientUnits="userSpaceOnUse"><stop offset="0" stop-color="#5a0008" stop-opacity=".42"/><stop offset=".22" stop-color="#5a0008" stop-opacity=".2"/><stop offset=".5" stop-color="#5a0008" stop-opacity="0"/><stop offset=".9" stop-color="#ff4040" stop-opacity="0"/><stop offset="1" stop-color="#ff5a5a" stop-opacity=".2"/></linearGradient>
<radialGradient id="rcap2" cx=".55" cy=".2" r=".8"><stop offset="0" stop-color="#f65a58"/><stop offset=".1" stop-color="#ee2c33"/><stop offset=".3" stop-color="#e81d27"/><stop offset=".75" stop-color="#e21b25"/><stop offset="1" stop-color="#b5161e"/></radialGradient>
<radialGradient id="gcap2" cx="1329" cy="480" r="44" gradientUnits="userSpaceOnUse"><stop offset="0" stop-color="#5cba56"/><stop offset=".1" stop-color="#33a230"/><stop offset=".3" stop-color="#279724"/><stop offset=".7" stop-color="#22901f"/><stop offset="1" stop-color="#1b7c1a"/></radialGradient>
<linearGradient id="rbase" x1="0" x2="0" y1="244" y2="419.2" gradientUnits="userSpaceOnUse"><stop offset="0" stop-color="#ea212b"/><stop offset=".55" stop-color="#e61c26"/><stop offset=".8" stop-color="#dc1b25"/><stop offset=".93" stop-color="#c2171f"/><stop offset="1" stop-color="#a5141b"/></linearGradient>
<radialGradient id="rhl" cx="1331" cy="273" r="34" gradientUnits="userSpaceOnUse"><stop offset="0" stop-color="#ff8a80" stop-opacity=".75"/><stop offset=".35" stop-color="#fa5a56" stop-opacity=".35"/><stop offset="1" stop-color="#f03a3a" stop-opacity="0"/></radialGradient>
<filter id="bl"><feGaussianBlur stdDeviation="2.2"/></filter>
<filter id="fb2" x="-5%" y="-5%" width="110%" height="110%"><feGaussianBlur stdDeviation=".65"/></filter>
</defs>
<g clip-path="url(#gcl)">
<rect x="1103" y="184" width="448" height="460" fill="url(#sky)"/>
<g filter="url(#fb2)">
<polygon points="1002.0,546.3 1652.0,546.3 1538.3,431.9 1115.7,431.9" fill="#eef0f0"/>
<path d="M1002.0,546.3L1652.0,546.3M1014.9,533.3L1639.1,533.3M1026.9,521.3L1627.1,521.3M1037.9,510.1L1616.1,510.1M1048.2,499.8L1605.8,499.8M1057.8,490.2L1596.2,490.2M1066.7,481.2L1587.3,481.2M1075.1,472.8L1578.9,472.8M1082.9,464.9L1571.1,464.9M1090.3,457.5L1563.7,457.5M1097.2,450.6L1556.8,450.6M1103.7,444.0L1550.3,444.0M1109.9,437.8L1544.1,437.8M1115.7,431.9L1538.3,431.9" stroke="#4060aa" stroke-width="1.4" fill="none"/>
<polygon points="1002.0,546.3 1005.8,546.3 1118.2,431.9 1115.7,431.9" fill="#4463ab"/>
<polygon points="1048.2,546.3 1055.8,546.3 1150.7,431.9 1145.8,431.9" fill="#4463ab"/>
<polygon points="1098.2,546.3 1105.8,546.3 1183.2,431.9 1178.3,431.9" fill="#4463ab"/>
<polygon points="1148.2,546.3 1155.8,546.3 1215.7,431.9 1210.8,431.9" fill="#4463ab"/>
<polygon points="1198.2,546.3 1205.8,546.3 1248.2,431.9 1243.3,431.9" fill="#4463ab"/>
<polygon points="1248.2,546.3 1255.8,546.3 1280.7,431.9 1275.8,431.9" fill="#4463ab"/>
<polygon points="1298.2,546.3 1305.8,546.3 1313.2,431.9 1308.3,431.9" fill="#4463ab"/>
<polygon points="1348.2,546.3 1355.8,546.3 1345.7,431.9 1340.8,431.9" fill="#4463ab"/>
<polygon points="1398.2,546.3 1405.8,546.3 1378.2,431.9 1373.3,431.9" fill="#4463ab"/>
<polygon points="1448.2,546.3 1455.8,546.3 1410.7,431.9 1405.8,431.9" fill="#4463ab"/>
<polygon points="1498.2,546.3 1505.8,546.3 1443.2,431.9 1438.3,431.9" fill="#4463ab"/>
<polygon points="1548.2,546.3 1555.8,546.3 1475.7,431.9 1470.8,431.9" fill="#4463ab"/>
<polygon points="1598.2,546.3 1605.8,546.3 1508.2,431.9 1503.3,431.9" fill="#4463ab"/>
<polygon points="1648.2,546.3 1652.0,546.3 1538.3,431.9 1535.8,431.9" fill="#4463ab"/>
</g>
<ellipse cx="1305" cy="499" rx="9" ry="10" fill="#1c3476" opacity=".85" filter="url(#bl)"/>
<rect x="1311" y="467" width="32.7" height="57.3" rx="16.3" ry="16.3" fill="url(#gcap2)"/>
<path d="M1281.7,290.3 A46.3,46.3 0 0 1 1374.3,290.3 L1369.6,376 A41.6,43.2 0 0 1 1286.4,376 Z" fill="url(#rbase)"/>
<path d="M1281.7,290.3 A46.3,46.3 0 0 1 1374.3,290.3 L1369.6,376 A41.6,43.2 0 0 1 1286.4,376 Z" fill="url(#rsh)"/>
<path d="M1281.7,290.3 A46.3,46.3 0 0 1 1374.3,290.3 L1369.6,376 A41.6,43.2 0 0 1 1286.4,376 Z" fill="url(#rhl)"/>
</g></svg>
<div class="tabbar" style="left:1609.5px;top:77px;width:311px"></div>
<div class="tab" style="left:1609.5px;top:77px;width:118px"></div>
<svg style="left:1620.5px;top:82.5px" width="13" height="13" viewBox="0 0 13 13" ><circle cx="6.5" cy="6.5" r="6.5" fill="#c4c4c4"/><rect x="5.5" y="5.4" width="2.1" height="5" fill="#3c3c3c"/><circle cx="6.5" cy="3.3" r="1.2" fill="#3c3c3c"/></svg>
<div class="t" style="left:1639px;top:78.5px;">Inspector</div>
<svg style="left:1875px;top:81px" width="11" height="13" viewBox="0 0 11 13" ><rect x=".7" y="6.2" width="9.6" height="5.6" fill="none" stroke="#c4c4c4" stroke-width="1.4"/><path d="M7.8,6V3.6a2.6,2.6 0 0 0 -5.2,0" fill="none" stroke="#c4c4c4" stroke-width="1.4"/></svg>
<svg style="left:1900px;top:80.5px" width="4" height="15" viewBox="0 0 4 15" ><circle cx="2" cy="2" r="1.6" fill="#c4c4c4"/><circle cx="2" cy="7.5" r="1.6" fill="#c4c4c4"/><circle cx="2" cy="13" r="1.6" fill="#c4c4c4"/></svg>
<div class="a" style="left:1609.5px;top:100px;width:311px;height:877px;background:#383838;"></div>
<div class="a" style="left:1609.5px;top:100px;width:311px;height:74px;background:#3c3c3c;"></div>
<div class="a" style="left:1609.5px;top:174px;width:311px;height:1px;background:#1f1f1f;"></div>
<svg style="left:1617px;top:112px" width="27" height="29" viewBox="0 0 27 29" ><path d="M12.5,1.2 L23.6,6.6 V19.6 L12.5,25.8 L1.4,19.6 V6.6 Z M1.6,6.8 L12.5,12.4 L23.4,6.8 M12.5,12.4 V25.6" fill="none" stroke="#c8c8c8" stroke-width="1.6" stroke-linejoin="round"/></svg>
<svg style="left:1642px;top:139px" width="8" height="5" viewBox="0 0 8 5" ><polygon points="0,0 8,0 4.0,5" fill="#c4c4c4"/></svg>
<div class="fld" style="left:1665.5px;top:114px;width:17.5px;height:18px;background:#2a2a2a"></div>
<svg style="left:1668.5px;top:117.5px" width="12" height="11" viewBox="0 0 12 11" ><path d="M1,5.6L4.4,9L10.8,1.4" fill="none" stroke="#e8e8e8" stroke-width="1.8"/></svg>
<div class="fld" style="left:1691px;top:111px;width:127px;height:23px"></div>
<div class="t b" style="left:1695px;top:113.3px;color:#d6d6d6">Boundaries</div>
<div class="fld" style="left:1823px;top:114px;width:17px;height:18px;background:#2a2a2a"></div>
<div class="t" style="left:1845px;top:112.8px;color:#c4c4c4">Static</div>
<svg style="left:1902.5px;top:119.5px" width="10" height="6" viewBox="0 0 10 6" ><polygon points="0,0 10,0 5.0,6" fill="#c4c4c4"/></svg>
<div class="t" style="left:1662px;top:143px;color:#c4c4c4">Tag</div>
<div class="a" style="left:1694.5px;top:142px;width:85px;height:21px;background:#515151;border-radius:3px;border:1px solid #303030"></div>
<div class="t" style="left:1699px;top:142.3px;">Untagge</div>
<svg style="left:1762px;top:150px" width="9" height="5" viewBox="0 0 9 5" ><polygon points="0,0 9,0 4.5,5" fill="#c4c4c4"/></svg>
<div class="t" style="left:1796px;top:143px;color:#c4c4c4">Layer</div>
<div class="a" style="left:1842.5px;top:142px;width:72px;height:21px;background:#515151;border-radius:3px;border:1px solid #303030"></div>
<div class="t" style="left:1847px;top:142.3px;">Defaul</div>
<svg style="left:1898px;top:150px" width="9" height="5" viewBox="0 0 9 5" ><polygon points="0,0 9,0 4.5,5" fill="#c4c4c4"/></svg>
<div class="a" style="left:1609.5px;top:175px;width:311px;height:26px;background:#3e3e3e;"></div>
<div class="a" style="left:1609.5px;top:201px;width:311px;height:1px;background:#303030;"></div>
<svg style="left:1617px;top:183.5px" width="11" height="9" viewBox="0 0 11 9" ><polygon points="0,0 11,0 5.5,9" fill="#6e6e6e"/></svg>
<svg style="left:1636px;top:180px" width="18" height="16" viewBox="0 0 18 16" ><g stroke-width="2.6" stroke-linecap="round"><path d="M9,1.6V7.4" stroke="#9adf3e"/><path d="M8.4,9.4L2,13" stroke="#3cb4e8"/><path d="M9.8,9.4L15.6,13" stroke="#e8623c"/></g></svg>
<div class="t b" style="left:1685px;top:178.5px;">Transform</div>
<svg style="left:1848.5px;top:181.5px" width="13" height="13" viewBox="0 0 13 13" ><circle cx="6.5" cy="6.5" r="6.5" fill="#c4c4c4"/><text x="3.4" y="10.6" font-size="10.5" font-weight="bold" fill="#3e3e3e" letter-spacing="0">?</text></svg>
<svg style="left:1873px;top:181px" width="14" height="14" viewBox="0 0 14 14" ><g stroke="#c4c4c4" stroke-width="1.5"><path d="M0,3.6H7M10.6,3.6H14M8.8,.6V6.6M0,10.4H2.6M6.6,10.4H14M4.6,7.4V13.4"/></g></svg>
<svg style="left:1902px;top:180.5px" width="4" height="15" viewBox="0 0 4 15" ><circle cx="2" cy="2" r="1.6" fill="#c4c4c4"/><circle cx="2" cy="7.5" r="1.6" fill="#c4c4c4"/><circle cx="2" cy="13" r="1.6" fill="#c4c4c4"/></svg>
<div class="t" style="left:1633px;top:208.5px;color:#c4c4c4;overflow:hidden;width:45.5px">Position</div>
<div class="t" style="left:1683px;top:208.5px;color:#c4c4c4">X</div>
<div class="fld" style="left:1700px;top:207.5px;width:55.5px;height:22px"></div>
<div class="t" style="left:1704px;top:209.0px;color:#d2d2d2">0</div>
<div class="t" style="left:1763px;top:208.5px;color:#c4c4c4">Y</div>
<div class="fld" style="left:1780px;top:207.5px;width:55.5px;height:22px"></div>
<div class="t" style="left:1784px;top:209.0px;color:#d2d2d2">0</div>
<div class="t" style="left:1843px;top:208.5px;color:#c4c4c4">Z</div>
<div class="fld" style="left:1859px;top:207.5px;width:55.5px;height:22px"></div>
<div class="t" style="left:1863px;top:209.0px;color:#d2d2d2">0</div>
<div class="t" style="left:1633px;top:233.5px;color:#c4c4c4;overflow:hidden;width:45.5px">Rotation</div>
<div class="t" style="left:1683px;top:233.5px;color:#c4c4c4">X</div>
<div class="fld" style="left:1700px;top:232.5px;width:55.5px;height:22px"></div>
<div class="t" style="left:1704px;top:234.0px;color:#d2d2d2">0</div>
<div class="t" style="left:1763px;top:233.5px;color:#c4c4c4">Y</div>
<div class="fld" style="left:1780px;top:232.5px;width:55.5px;height:22px"></div>
<div class="t" style="left:1784px;top:234.0px;color:#d2d2d2">0</div>
<div class="t" style="left:1843px;top:233.5px;color:#c4c4c4">Z</div>
<div class="fld" style="left:1859px;top:232.5px;width:55.5px;height:22px"></div>
<div class="t" style="left:1863px;top:234.0px;color:#d2d2d2">0</div>
<div class="t" style="left:1633px;top:258.5px;color:#c4c4c4">Sc</div>
<div class="t" style="left:1683px;top:258.5px;color:#c4c4c4">X</div>
<div class="fld" style="left:1700px;top:257.5px;width:55.5px;height:22px"></div>
<div class="t" style="left:1704px;top:259.0px;color:#d2d2d2">1</div>
<div class="t" style="left:1763px;top:258.5px;color:#c4c4c4">Y</div>
<div class="fld" style="left:1780px;top:257.5px;width:55.5px;height:22px"></div>
<div class="t" style="left:1784px;top:259.0px;color:#d2d2d2">1</div>
<div class="t" style="left:1843px;top:258.5px;color:#c4c4c4">Z</div>
<div class="fld" style="left:1859px;top:257.5px;width:55.5px;height:22px"></div>
<div class="t" style="left:1863px;top:259.0px;color:#d2d2d2">1</div>
<svg style="left:1654px;top:262px" width="17" height="13" viewBox="0 0 17 13" ><g stroke="#c4c4c4" stroke-width="1.4" fill="none"><path d="M7,3.4H4.6a3.2,3.2 0 0 0 0,6.4H7M10,3.4h2.4a3.2,3.2 0 0 1 0,6.4H10"/><path d="M2.4,.4L14.2,12.6"/></g></svg>
<div class="a" style="left:1609.5px;top:291px;width:311px;height:1px;background:#1f1f1f;"></div>
<div class="a" style="left:1620.5px;top:303px;width:286px;height:28.5px;background:#585858;border-radius:3px;border:1px solid #2f2f2f;border-top-color:#666"></div>
<div class="t" style="left:1706px;top:307.8px;color:#e0e0e0">Add Component</div>
<div class="tabbar" style="left:0;top:704px;width:1607px"></div>
<div class="tab" style="left:0;top:704px;width:102px"></div>
<svg style="left:8px;top:710px" width="15" height="12" viewBox="0 0 15 12" ><path d="M0,1.2 Q0,0 1.2,0 H5.6 L7.2,2 H13.8 Q15,2 15,3.2 V10.8 Q15,12 13.8,12 H1.2 Q0,12 0,10.8 Z" fill="#c4c4c4"/></svg>
<div class="t" style="left:28px;top:706.5px;">Project</div>
<svg style="left:113px;top:710px" width="13" height="12" viewBox="0 0 13 12" ><rect x=".7" y=".7" width="11.6" height="10.6" fill="none" stroke="#c4c4c4" stroke-width="1.4"/><path d="M2.4,3.3H10.6M2.4,6H10.6M2.4,8.7H10.6" stroke="#c4c4c4" stroke-width="1.7"/></svg>
<div class="t" style="left:132px;top:706.5px;">Console</div>
<svg style="left:1563px;top:708px" width="11" height="13" viewBox="0 0 11 13" ><rect x=".7" y="6.2" width="9.6" height="5.6" fill="none" stroke="#c4c4c4" stroke-width="1.4"/><path d="M7.8,6V3.6a2.6,2.6 0 0 0 -5.2,0" fill="none" stroke="#c4c4c4" stroke-width="1.4"/></svg>
<svg style="left:1588.5px;top:707.5px" width="4" height="15" viewBox="0 0 4 15" ><circle cx="2" cy="2" r="1.6" fill="#c4c4c4"/><circle cx="2" cy="7.5" r="1.6" fill="#c4c4c4"/><circle cx="2" cy="13" r="1.6" fill="#c4c4c4"/></svg>
<div class="tool" style="left:0;top:727px;width:1607px;height:27px;border-bottom:1px solid #232323"></div>
<svg style="left:8px;top:732.5px" width="16" height="16" viewBox="0 0 16 16" ><path d="M8,0.5V15.5M0.5,8H15.5" stroke="#c4c4c4" stroke-width="1.8"/></svg>
<svg style="left:29px;top:738px" width="9" height="5" viewBox="0 0 9 5" ><polygon points="0,0 9,0 4.5,5" fill="#c4c4c4"/></svg>
<div class="fld" style="left:1065px;top:731px;width:397px;height:19.5px;border-radius:4px"></div>
<svg style="left:1071px;top:736px" width="10" height="10" viewBox="0 0 10 10" ><circle cx="3.6" cy="3.6" r="2.7" fill="none" stroke="#c4c4c4" stroke-width="1.5"/><path d="M5.6,5.6L8.8,8.8" stroke="#c4c4c4" stroke-width="1.8"/></svg>
<div class="a" style="left:1441px;top:732.5px;width:20px;height:17px;background:#3a3a3a;border-radius:0 3px 3px 0"></div>
<svg style="left:1443.5px;top:733.5px" width="15" height="14" viewBox="0 0 15 14" ><rect x="4.6" y=".8" width="9.6" height="9.6" rx="1.2" fill="none" stroke="#bdbdbd" stroke-width="1.3"/><rect x=".8" y="7.6" width="5.4" height="5.4" fill="#3a3a3a" stroke="#bdbdbd" stroke-width="1.3"/><path d="M7.2,7.6L11.6,3.2M8.2,3.2h3.4v3.4" fill="none" stroke="#bdbdbd" stroke-width="1.3"/></svg>
<div class="a" style="left:1465px;top:728px;width:1px;height:25px;background:#262626;"></div>
<div class="a" style="left:1497.5px;top:728px;width:1px;height:25px;background:#262626;"></div>
<div class="a" style="left:1530px;top:728px;width:1px;height:25px;background:#262626;"></div>
<div class="a" style="left:1564px;top:728px;width:1px;height:25px;background:#262626;"></div>
<svg style="left:1473px;top:732px" width="16" height="17" viewBox="0 0 16 17" ><rect x="2" y="0" width="7.4" height="7" fill="#c4c4c4"/><circle cx="4.6" cy="12" r="4.6" fill="#c4c4c4"/><polygon points="12,4.4 16,12 8.4,12" fill="#c4c4c4"/></svg>
<svg style="left:1506px;top:734px" width="15" height="13" viewBox="0 0 15 13" ><path d="M7.4,0H14.4V6.6L6.8,13L0,6.4Z" fill="#c4c4c4"/><circle cx="11.6" cy="3" r="1.3" fill="#3c3c3c"/></svg>
<svg style="left:1539px;top:733.5px" width="15" height="14" viewBox="0 0 15 14" ><polygon points="7.5,0 9.8,4.9 15,5.5 11.1,9.1 12.2,14 7.5,11.4 2.8,14 3.9,9.1 0,5.5 5.2,4.9" fill="#8c8c8c"/></svg>
<svg style="left:1570px;top:733px" width="20" height="16" viewBox="0 0 20 16" ><path d="M1,8.4 Q9.5,-1 18,8.4 Q9.5,17 1,8.4Z" fill="none" stroke="#c4c4c4" stroke-width="1.5"/><circle cx="9.5" cy="8.2" r="2.6" fill="#c4c4c4"/><path d="M3,15L16.6,.8" stroke="#3c3c3c" stroke-width="3.6"/><path d="M3,15L16.6,.8" stroke="#c4c4c4" stroke-width="1.5"/></svg>
<div class="t" style="left:1591.5px;top:731px;color:#c4c4c4">4</div>
<div class="a" style="left:0px;top:754px;width:260px;height:223px;background:#383838;"></div>
<div class="a" style="left:259px;top:754px;width:1.5px;height:223px;background:#232323;"></div>
<div class="a" style="left:243px;top:754px;width:16px;height:223px;background:#353535;"></div>
<div class="a" style="left:246px;top:790px;width:11.5px;height:95px;background:#5f5f5f;border-radius:6px"></div>
<svg style="left:246.5px;top:761px" width="9" height="6" viewBox="0 0 9 6" ><polygon points="0,6 9,6 4.5,0" fill="#c4c4c4"/></svg>
<svg style="left:246.5px;top:964.5px" width="9" height="6" viewBox="0 0 9 6" ><polygon points="0,0 9,0 4.5,6" fill="#c4c4c4"/></svg>
<div class="a" style="left:0;top:754px;width:243px;height:223px;overflow:hidden">
<svg style="left:39px;top:-4.0px" width="15" height="15" viewBox="0 0 16 16" ><circle cx="6" cy="6" r="4.8" fill="none" stroke="#bdbdbd" stroke-width="1.5"/><path d="M9.6,9.6 L14.4,14.4" stroke="#bdbdbd" stroke-width="2.2" stroke-linecap="round"/></svg>
<div class="t" style="left:60px;top:-7.0px">All Models</div>
<svg style="left:39px;top:16.0px" width="15" height="15" viewBox="0 0 16 16" ><circle cx="6" cy="6" r="4.8" fill="none" stroke="#bdbdbd" stroke-width="1.5"/><path d="M9.6,9.6 L14.4,14.4" stroke="#bdbdbd" stroke-width="2.2" stroke-linecap="round"/></svg>
<div class="t" style="left:60px;top:13.0px">All Prefabs</div>
<div class="a" style="left:0;top:53px;width:243px;height:20px;background:#4d4d4d"></div>
<svg style="left:22.5px;top:57px" width="17" height="12" viewBox="0 0 17 12" ><path d="M.7,11 V1.6 Q.7,.7 1.6,.7 H5.4 L6.9,2.6 H12.4 Q13.3,2.6 13.3,3.5 V4.6" fill="none" stroke="#c4c4c4" stroke-width="1.4"/><path d="M3.6,4.8 H16.4 L13.6,11.6 H.9 Z" fill="#c4c4c4"/></svg>
<svg style="left:4px;top:58.5px" width="11" height="9" viewBox="0 0 11 9" ><polygon points="0,0 11,0 5.5,9" fill="#6e6e6e"/></svg>
<div class="t b" style="left:44px;top:52.5px">Assets</div>
<svg style="left:39px;top:77px" width="15" height="12" viewBox="0 0 15 12" ><path d="M0,1.2 Q0,0 1.2,0 H5.6 L7.2,2 H13.8 Q15,2 15,3.2 V10.8 Q15,12 13.8,12 H1.2 Q0,12 0,10.8 Z" fill="#c4c4c4"/></svg>
<div class="t" style="left:60px;top:72.5px">Scenes</div>
<svg style="left:22.5px;top:97px" width="17" height="12" viewBox="0 0 17 12" ><path d="M.7,11 V1.6 Q.7,.7 1.6,.7 H5.4 L6.9,2.6 H12.4 Q13.3,2.6 13.3,3.5 V4.6" fill="none" stroke="#c4c4c4" stroke-width="1.4"/><path d="M3.6,4.8 H16.4 L13.6,11.6 H.9 Z" fill="#c4c4c4"/></svg>
<svg style="left:4px;top:98.5px" width="11" height="9" viewBox="0 0 11 9" ><polygon points="0,0 11,0 5.5,9" fill="#6e6e6e"/></svg>
<div class="t b" style="left:44px;top:92.5px">Packages</div>
<svg style="left:39px;top:117px" width="15" height="12" viewBox="0 0 15 12" ><path d="M0,1.2 Q0,0 1.2,0 H5.6 L7.2,2 H13.8 Q15,2 15,3.2 V10.8 Q15,12 13.8,12 H1.2 Q0,12 0,10.8 Z" fill="#c4c4c4"/></svg>
<svg style="left:24px;top:118px" width="8.5" height="10" viewBox="0 0 8.5 10" ><polygon points="0,0 8.5,5.0 0,10" fill="#6e6e6e"/></svg>
<div class="t" style="left:60px;top:112.5px">Code Coverage</div>
<svg style="left:39px;top:137px" width="15" height="12" viewBox="0 0 15 12" ><path d="M0,1.2 Q0,0 1.2,0 H5.6 L7.2,2 H13.8 Q15,2 15,3.2 V10.8 Q15,12 13.8,12 H1.2 Q0,12 0,10.8 Z" fill="#c4c4c4"/></svg>
<svg style="left:24px;top:138px" width="8.5" height="10" viewBox="0 0 8.5 10" ><polygon points="0,0 8.5,5.0 0,10" fill="#6e6e6e"/></svg>
<div class="t" style="left:60px;top:132.5px">Custom NUnit</div>
<svg style="left:39px;top:157px" width="15" height="12" viewBox="0 0 15 12" ><path d="M0,1.2 Q0,0 1.2,0 H5.6 L7.2,2 H13.8 Q15,2 15,3.2 V10.8 Q15,12 13.8,12 H1.2 Q0,12 0,10.8 Z" fill="#c4c4c4"/></svg>
<svg style="left:24px;top:158px" width="8.5" height="10" viewBox="0 0 8.5 10" ><polygon points="0,0 8.5,5.0 0,10" fill="#6e6e6e"/></svg>
<div class="t" style="left:60px;top:152.5px">Editor Coroutines</div>
<svg style="left:39px;top:177px" width="15" height="12" viewBox="0 0 15 12" ><path d="M0,1.2 Q0,0 1.2,0 H5.6 L7.2,2 H13.8 Q15,2 15,3.2 V10.8 Q15,12 13.8,12 H1.2 Q0,12 0,10.8 Z" fill="#c4c4c4"/></svg>
<svg style="left:24px;top:178px" width="8.5" height="10" viewBox="0 0 8.5 10" ><polygon points="0,0 8.5,5.0 0,10" fill="#6e6e6e"/></svg>
<div class="t" style="left:60px;top:172.5px">JetBrains Rider Editor</div>
<svg style="left:39px;top:197px" width="15" height="12" viewBox="0 0 15 12" ><path d="M0,1.2 Q0,0 1.2,0 H5.6 L7.2,2 H13.8 Q15,2 15,3.2 V10.8 Q15,12 13.8,12 H1.2 Q0,12 0,10.8 Z" fill="#c4c4c4"/></svg>
<svg style="left:24px;top:198px" width="8.5" height="10" viewBox="0 0 8.5 10" ><polygon points="0,0 8.5,5.0 0,10" fill="#6e6e6e"/></svg>
<div class="t" style="left:60px;top:192.5px">Newtonsoft Json</div>
<svg style="left:39px;top:217px" width="15" height="12" viewBox="0 0 15 12" ><path d="M0,1.2 Q0,0 1.2,0 H5.6 L7.2,2 H13.8 Q15,2 15,3.2 V10.8 Q15,12 13.8,12 H1.2 Q0,12 0,10.8 Z" fill="#c4c4c4"/></svg>
<svg style="left:24px;top:218px" width="8.5" height="10" viewBox="0 0 8.5 10" ><polygon points="0,0 8.5,5.0 0,10" fill="#6e6e6e"/></svg>
<div class="t" style="left:60px;top:212.5px">Profile Analyzer</div>
</div>
<div class="a" style="left:260.5px;top:754px;width:1346.5px;height:223px;background:#333333;"></div>
<div class="a" style="left:260.5px;top:754px;width:1346.5px;height:25.5px;background:#3f3f3f;border-bottom:1px solid #2a2a2a"></div>
<div class="t b" style="left:265px;top:757px;color:#c8c8c8;letter-spacing:.5px">Assets</div>
<div class="a" style="left:260.5px;top:952px;width:1346.5px;height:25px;background:#3f3f3f;"></div>
<div class="a" style="left:1518px;top:963.2px;width:70px;height:1.6px;background:#5e5e5e;"></div>
<div class="a" style="left:1552px;top:958px;width:12.5px;height:12.5px;background:#a0a0a0;border-radius:7px"></div>
<svg style="left:289px;top:808px" width="60" height="50" viewBox="0 0 60 50" ><path d="M0,5 Q0,0 5,0 H22 L28,8 H55 Q60,8 60,13 V45 Q60,50 55,50 H5 Q0,50 0,45 Z" fill="#c4c4c4"/></svg>
<div class="a" style="left:376px;top:796px;width:75px;height:75px;background:#525252;box-shadow:0 0 2px 1px rgba(0,0,0,.35)"></div>
<svg style="left:378px;top:798px" width="71" height="71" viewBox="0 0 71 71" ><defs><radialGradient id="ms1" cx=".5" cy=".5" fx=".36" fy=".3" r=".56"><stop offset="0" stop-color="#e2606a"/><stop offset=".12" stop-color="#d43843"/><stop offset=".5" stop-color="#c52230"/><stop offset=".8" stop-color="#9c1c28"/><stop offset="1" stop-color="#6e1e28"/></radialGradient></defs><circle cx="35.5" cy="35.5" r="34.5" fill="url(#ms1)"/></svg>
<div class="a" style="left:471px;top:796px;width:75px;height:75px;background:#525252;box-shadow:0 0 2px 1px rgba(0,0,0,.35)"></div>
<svg style="left:473px;top:798px" width="71" height="71" viewBox="0 0 71 71" ><defs><radialGradient id="ms2" cx=".5" cy=".5" fx=".38" fy=".3" r=".56"><stop offset="0" stop-color="#d8d8da"/><stop offset=".5" stop-color="#b6b6ba"/><stop offset=".85" stop-color="#7c7d84"/><stop offset="1" stop-color="#5c5e66"/></radialGradient></defs><circle cx="35.5" cy="35.5" r="34.5" fill="url(#ms2)"/><g fill="none" stroke="#3a5598" stroke-width="1.1" opacity=".9"><path d="M23.6,67.8L25.4,68.4L27.3,68.8L29.2,69.2L31.3,69.5L33.4,69.6L35.5,69.7L37.6,69.6L39.7,69.5L41.8,69.2L43.7,68.8L45.6,68.4L47.4,67.8M11.3,60.0L12.9,61.1L14.8,62.2L16.8,63.1L19.1,64.0L21.5,64.8L24.1,65.4L26.9,65.9L29.7,66.2L32.6,66.4L35.5,66.5L38.4,66.4L41.3,66.2L44.1,65.9L46.9,65.4L49.5,64.8L51.9,64.0L54.2,63.1L56.2,62.2L58.1,61.1L59.7,60.0M3.4,48.1L4.3,49.7L5.5,51.2L7.1,52.6L9.0,54.0L11.1,55.2L13.5,56.4L16.2,57.4L19.1,58.3L22.2,59.0L25.4,59.6L28.7,60.0L32.1,60.2L35.5,60.3L38.9,60.2L42.3,60.0L45.6,59.6L48.8,59.0L51.9,58.3L54.8,57.4L57.5,56.4L59.9,55.2L62.0,54.0L63.9,52.6L65.5,51.2L66.7,49.7L67.6,48.1M1.2,37.2L1.8,38.9L2.7,40.5L4.0,42.1L5.6,43.6L7.6,45.0L9.9,46.3L12.4,47.5L15.2,48.6L18.3,49.5L21.5,50.3L24.8,50.9L28.3,51.3L31.9,51.6L35.5,51.7L39.1,51.6L42.7,51.3L46.2,50.9L49.5,50.3L52.8,49.5L55.8,48.6L58.6,47.5L61.1,46.3L63.4,45.0L65.4,43.6L67.0,42.1L68.3,40.5L69.2,38.9L69.8,37.2M2.9,24.5L2.7,26.1L2.9,27.7L3.4,29.3L4.3,30.8L5.5,32.4L7.1,33.8L9.0,35.1L11.1,36.4L13.5,37.5L16.2,38.5L19.1,39.4L22.2,40.2L25.4,40.7L28.7,41.2L32.1,41.4L35.5,41.5L38.9,41.4L42.3,41.2L45.6,40.7L48.8,40.2L51.9,39.4L54.8,38.5L57.5,37.5L59.9,36.4L62.0,35.1L63.9,33.8L65.5,32.4L66.7,30.8L67.6,29.3L68.1,27.7L68.3,26.1L68.1,24.5M9.0,13.5L8.2,14.9L7.7,16.2L7.6,17.6L7.7,19.0L8.2,20.3L9.0,21.6L10.0,22.9L11.3,24.1L12.9,25.3L14.8,26.4L16.8,27.3L19.1,28.2L21.5,28.9L24.1,29.6L26.9,30.1L29.7,30.4L32.6,30.6L35.5,30.7L38.4,30.6L41.3,30.4L44.1,30.1L46.9,29.6L49.5,28.9L51.9,28.2L54.2,27.3L56.2,26.4L58.1,25.3L59.7,24.1L61.0,22.9L62.0,21.6L62.8,20.3L63.3,19.0L63.4,17.6L63.3,16.2L62.8,14.9L62.0,13.5M20.4,4.5L19.1,5.3L17.9,6.1L17.0,7.0L16.2,7.9L15.7,8.9L15.3,9.9L15.2,10.9L15.3,11.9L15.7,12.8L16.2,13.8L17.0,14.7L17.9,15.6L19.1,16.5L20.4,17.2L21.9,17.9L23.6,18.6L25.4,19.1L27.3,19.6L29.2,19.9L31.3,20.2L33.4,20.3L35.5,20.4L37.6,20.3L39.7,20.2L41.8,19.9L43.7,19.6L45.6,19.1L47.4,18.6L49.1,17.9L50.6,17.2L51.9,16.5L53.1,15.6L54.0,14.7L54.8,13.8L55.3,12.8L55.7,11.9L55.8,10.9L55.7,9.9L55.3,8.9L54.8,7.9L54.0,7.0L53.1,6.1L51.9,5.3L50.6,4.5M35.5,1.5L34.4,1.6L33.3,1.6L32.2,1.8L31.2,2.0L30.2,2.2L29.2,2.5L28.4,2.8L27.6,3.2L26.9,3.6L26.3,4.0L25.8,4.5L25.4,5.0L25.1,5.5L24.9,6.0L24.8,6.5L24.9,7.1L25.1,7.6L25.4,8.1L25.8,8.6L26.3,9.0L26.9,9.5L27.6,9.9L28.4,10.2L29.2,10.6L30.2,10.9L31.2,11.1L32.2,11.3L33.3,11.4L34.4,11.5L35.5,11.5L36.6,11.5L37.7,11.4L38.8,11.3L39.8,11.1L40.8,10.9L41.8,10.6L42.6,10.2L43.4,9.9L44.1,9.5L44.7,9.0L45.2,8.6L45.6,8.1L45.9,7.6L46.1,7.1L46.2,6.5L46.1,6.0L45.9,5.5L45.6,5.0L45.2,4.5L44.7,4.0L44.1,3.6L43.4,3.2L42.6,2.8L41.8,2.5L40.8,2.2L39.8,2.0L38.8,1.8L37.7,1.6L36.6,1.6L35.5,1.5M35.5,70.0L35.5,69.7L35.5,69.0L35.5,67.9L35.5,66.5L35.5,64.8L35.5,62.7L35.5,60.3L35.5,57.7L35.5,54.8L35.5,51.7L35.5,48.4L35.5,45.0L35.5,41.5L35.5,37.9L35.5,34.3L35.5,30.7L35.5,27.2L35.5,23.7L35.5,20.4L35.5,17.2L35.5,14.3L35.5,11.5L35.5,9.1L35.5,6.9L35.5,5.0M41.8,69.2L42.6,68.4L43.4,67.3L44.1,65.9L44.7,64.1L45.2,62.0L45.6,59.6L45.9,56.9L46.1,54.0L46.2,50.9L46.1,47.6L45.9,44.2L45.6,40.7L45.2,37.2L44.7,33.6L44.1,30.1L43.4,26.6L42.6,23.2L41.8,19.9L40.8,16.8L39.8,13.9L38.8,11.3L37.7,8.9L36.6,6.8L35.5,5.0M47.4,67.8L49.1,66.9L50.6,65.6L51.9,64.0L53.1,62.1L54.0,59.9L54.8,57.4L55.3,54.7L55.7,51.7L55.8,48.6L55.7,45.3L55.3,42.0L54.8,38.5L54.0,35.1L53.1,31.6L51.9,28.2L50.6,24.9L49.1,21.6L47.4,18.6L45.6,15.7L43.7,13.0L41.8,10.6L39.7,8.4L37.6,6.6L35.5,5.0M56.2,63.0L58.1,61.1L59.7,59.0L61.0,56.6L62.0,54.0L62.8,51.1L63.3,48.2L63.4,45.0L63.3,41.8L62.8,38.5L62.0,35.1L61.0,31.8L59.7,28.5L58.1,25.3L56.2,22.2L54.2,19.2L51.9,16.5L49.5,13.9L46.9,11.5L44.1,9.5L41.3,7.7L38.4,6.2L35.5,5.0M65.5,52.5L66.7,49.7L67.6,46.7L68.1,43.7L68.3,40.5L68.1,37.3L67.6,34.1L66.7,30.8L65.5,27.7L63.9,24.6L62.0,21.6L59.9,18.8L57.5,16.2L54.8,13.8L51.9,11.6L48.8,9.7L45.6,8.1L42.3,6.7L38.9,5.7L35.5,5.0M69.8,32.3L69.2,29.2L68.3,26.1L67.0,23.1L65.4,20.3L63.4,17.6L61.1,15.1L58.6,12.9L55.8,10.9L52.8,9.1L49.5,7.7L46.2,6.5L42.7,5.7L39.1,5.2L35.5,5.0M62.0,13.5L59.9,11.4L57.5,9.5L54.8,7.9L51.9,6.6L48.8,5.6L45.6,5.0L42.3,4.7L38.9,4.7L35.5,5.0M51.9,5.3L49.5,4.4L46.9,3.8L44.1,3.6L41.3,3.7L38.4,4.2L35.5,5.0M45.6,2.6L43.7,2.3L41.8,2.5L39.7,3.0L37.6,3.8L35.5,5.0M39.8,1.4L38.8,1.8L37.7,2.5L36.6,3.6L35.5,5.0M35.5,1.1L35.5,1.5L35.5,2.3L35.5,3.5L35.5,5.0M31.2,1.4L32.2,1.8L33.3,2.5L34.4,3.6L35.5,5.0M25.4,2.6L27.3,2.3L29.2,2.5L31.3,3.0L33.4,3.8L35.5,5.0M19.1,5.3L21.5,4.4L24.1,3.8L26.9,3.6L29.7,3.7L32.6,4.2L35.5,5.0M9.0,13.5L11.1,11.4L13.5,9.5L16.2,7.9L19.1,6.6L22.2,5.6L25.4,5.0L28.7,4.7L32.1,4.7L35.5,5.0M1.2,32.3L1.8,29.2L2.7,26.1L4.0,23.1L5.6,20.3L7.6,17.6L9.9,15.1L12.4,12.9L15.2,10.9L18.2,9.1L21.5,7.7L24.8,6.5L28.3,5.7L31.9,5.2L35.5,5.0M5.5,52.5L4.3,49.7L3.4,46.7L2.9,43.7L2.7,40.5L2.9,37.3L3.4,34.1L4.3,30.8L5.5,27.7L7.1,24.6L9.0,21.6L11.1,18.8L13.5,16.2L16.2,13.8L19.1,11.6L22.2,9.7L25.4,8.1L28.7,6.7L32.1,5.7L35.5,5.0M14.8,63.0L12.9,61.1L11.3,59.0L10.0,56.6L9.0,54.0L8.2,51.1L7.7,48.2L7.6,45.0L7.7,41.8L8.2,38.5L9.0,35.1L10.0,31.8L11.3,28.5L12.9,25.3L14.8,22.2L16.8,19.2L19.1,16.5L21.5,13.9L24.1,11.5L26.9,9.5L29.7,7.7L32.6,6.2L35.5,5.0M23.6,67.8L21.9,66.9L20.4,65.6L19.1,64.0L17.9,62.1L17.0,59.9L16.2,57.4L15.7,54.7L15.3,51.7L15.2,48.6L15.3,45.3L15.7,42.0L16.2,38.5L17.0,35.1L17.9,31.6L19.1,28.2L20.4,24.9L21.9,21.6L23.6,18.6L25.4,15.7L27.3,13.0L29.2,10.6L31.3,8.4L33.4,6.6L35.5,5.0M29.2,69.2L28.4,68.4L27.6,67.3L26.9,65.9L26.3,64.1L25.8,62.0L25.4,59.6L25.1,56.9L24.9,54.0L24.8,50.9L24.9,47.6L25.1,44.2L25.4,40.7L25.8,37.2L26.3,33.6L26.9,30.1L27.6,26.6L28.4,23.2L29.2,19.9L30.2,16.8L31.2,13.9L32.2,11.3L33.3,8.9L34.4,6.8L35.5,5.0"/></g></svg>
<svg style="left:566px;top:796px" width="75" height="75" viewBox="0 0 75 75" ><rect x="0" y="0" width="75" height="75" fill="#f4f5f8"/><g stroke="#5872b8" stroke-width=".8" stroke-opacity=".7"><path d="M0.5,0V75M0,0.5H75"/><path d="M4.2,0V75M0,4.2H75"/><path d="M7.9,0V75M0,7.9H75"/><path d="M11.6,0V75M0,11.6H75"/><path d="M15.3,0V75M0,15.3H75"/><path d="M19.0,0V75M0,19.0H75"/><path d="M22.7,0V75M0,22.7H75"/><path d="M26.4,0V75M0,26.4H75"/><path d="M30.1,0V75M0,30.1H75"/><path d="M33.8,0V75M0,33.8H75"/><path d="M37.5,0V75M0,37.5H75"/><path d="M41.2,0V75M0,41.2H75"/><path d="M44.9,0V75M0,44.9H75"/><path d="M48.6,0V75M0,48.6H75"/><path d="M52.3,0V75M0,52.3H75"/><path d="M56.0,0V75M0,56.0H75"/><path d="M59.7,0V75M0,59.7H75"/><path d="M63.4,0V75M0,63.4H75"/><path d="M67.1,0V75M0,67.1H75"/><path d="M70.8,0V75M0,70.8H75"/><path d="M74.5,0V75M0,74.5H75"/></g></svg>
<svg style="left:669px;top:797px" width="60" height="71" viewBox="0 0 60 71" ><path d="M5,0 H46 L60,14 V66 Q60,71 55,71 H5 Q0,71 0,66 V5 Q0,0 5,0Z" fill="#ededed"/><g stroke="#2b7a33" stroke-width="4.6" fill="none"><path d="M25.6,17L20.2,57.5M39.4,17L34,57.5"/><path d="M13,30H46.5M11.4,44.6H44.8"/></g></svg>
<svg style="left:764px;top:797px" width="60" height="71" viewBox="0 0 60 71" ><path d="M5,0 H46 L60,14 V66 Q60,71 55,71 H5 Q0,71 0,66 V5 Q0,0 5,0Z" fill="#ededed"/><g stroke="#2b7a33" stroke-width="4.6" fill="none"><path d="M25.6,17L20.2,57.5M39.4,17L34,57.5"/><path d="M13,30H46.5M11.4,44.6H44.8"/></g></svg>
<div class="a" style="left:851px;top:796px;width:75px;height:75px;background:#525252;box-shadow:0 0 2px 1px rgba(0,0,0,.35)"></div>
<svg style="left:853px;top:798px" width="71" height="71" viewBox="0 0 71 71" ><defs><radialGradient id="ms3" cx=".5" cy=".5" fx=".36" fy=".3" r=".56"><stop offset="0" stop-color="#5e9866"/><stop offset=".12" stop-color="#3f8848"/><stop offset=".5" stop-color="#2d7a37"/><stop offset=".8" stop-color="#22602b"/><stop offset="1" stop-color="#31553c"/></radialGradient></defs><circle cx="35.5" cy="35.5" r="34.5" fill="url(#ms3)"/></svg>
<div class="al" style="left:271.5px">Scenes</div>
<div class="al" style="left:366.5px">boss</div>
<div class="al" style="left:460px">floor</div>
<div class="al" style="left:556px">grid</div>
<div class="al" style="left:650.5px">Inputs</div>
<div class="al" style="left:745px">Movement</div>
<div class="al" style="left:840px">New Mater...</div>
<div class="a" style="left:0px;top:977px;width:1920px;height:26px;background:#191919;"></div>
<svg style="left:3px;top:981px" width="17" height="18" viewBox="0 0 17 18" ><circle cx="8.2" cy="8.2" r="8.2" fill="#e6e6e6"/><polygon points="10,14 16,18 14,11" fill="#e6e6e6"/><rect x="7" y="3.4" width="2.6" height="6.6" fill="#191919"/><rect x="7" y="11.2" width="2.6" height="2.4" fill="#191919"/></svg>
<div class="t" style="left:25px;top:981px;color:#cfcfcf">Combo Done!</div>
<div class="a" style="left:1788px;top:977px;width:1px;height:26px;background:#2a2a2a;"></div>
<svg style="left:1795px;top:982px" width="20" height="20" viewBox="0 0 20 20" ><ellipse cx="10" cy="11" rx="4.6" ry="6" fill="#c4c4c4"/><circle cx="10" cy="4.6" r="2.6" fill="#c4c4c4"/><g stroke="#c4c4c4" stroke-width="1.3"><path d="M2.6,6l3.4,2.4M17.4,6l-3.4,2.4M1.6,11.4h4M18.4,11.4h-4M2.6,17l3.4,-2.4M17.4,17l-3.4,-2.4"/></g><path d="M2,2L18,18.6" stroke="#191919" stroke-width="3.4"/><path d="M2,2L18,18.6" stroke="#c4c4c4" stroke-width="1.4"/></svg>
<svg style="left:1827px;top:982px" width="20" height="20" viewBox="0 0 20 20" ><g fill="#c4c4c4"><ellipse cx="10" cy="4.6" rx="7" ry="3"/><path d="M3,7.4 a7,3 0 0 0 14,0 V9.6 a7,3 0 0 1 -14,0Z"/><path d="M3,11.6 a7,3 0 0 0 14,0 V13.8 a7,3 0 0 1 -14,0Z"/></g><path d="M2,2L18,18.6" stroke="#191919" stroke-width="3.4"/><path d="M2,2L18,18.6" stroke="#c4c4c4" stroke-width="1.4"/></svg>
<svg style="left:1860px;top:982px" width="20" height="20" viewBox="0 0 20 20" ><circle cx="10" cy="10" r="7" fill="none" stroke="#c4c4c4" stroke-width="1.5"/><ellipse cx="10" cy="10" rx="3" ry="7" fill="none" stroke="#c4c4c4" stroke-width="1.2"/><path d="M3,10H17" stroke="#c4c4c4" stroke-width="1.2"/><path d="M2,2L18,18.6" stroke="#191919" stroke-width="3.4"/><path d="M2,2L18,18.6" stroke="#c4c4c4" stroke-width="1.4"/></svg>
<svg style="left:1892px;top:982px" width="20" height="20" viewBox="0 0 20 20" ><circle cx="10" cy="10" r="7.6" fill="none" stroke="#c4c4c4" stroke-width="1.5"/><path d="M6,10.2L9,13L14,7.4" fill="none" stroke="#c4c4c4" stroke-width="1.6"/></svg>
</body></html>
